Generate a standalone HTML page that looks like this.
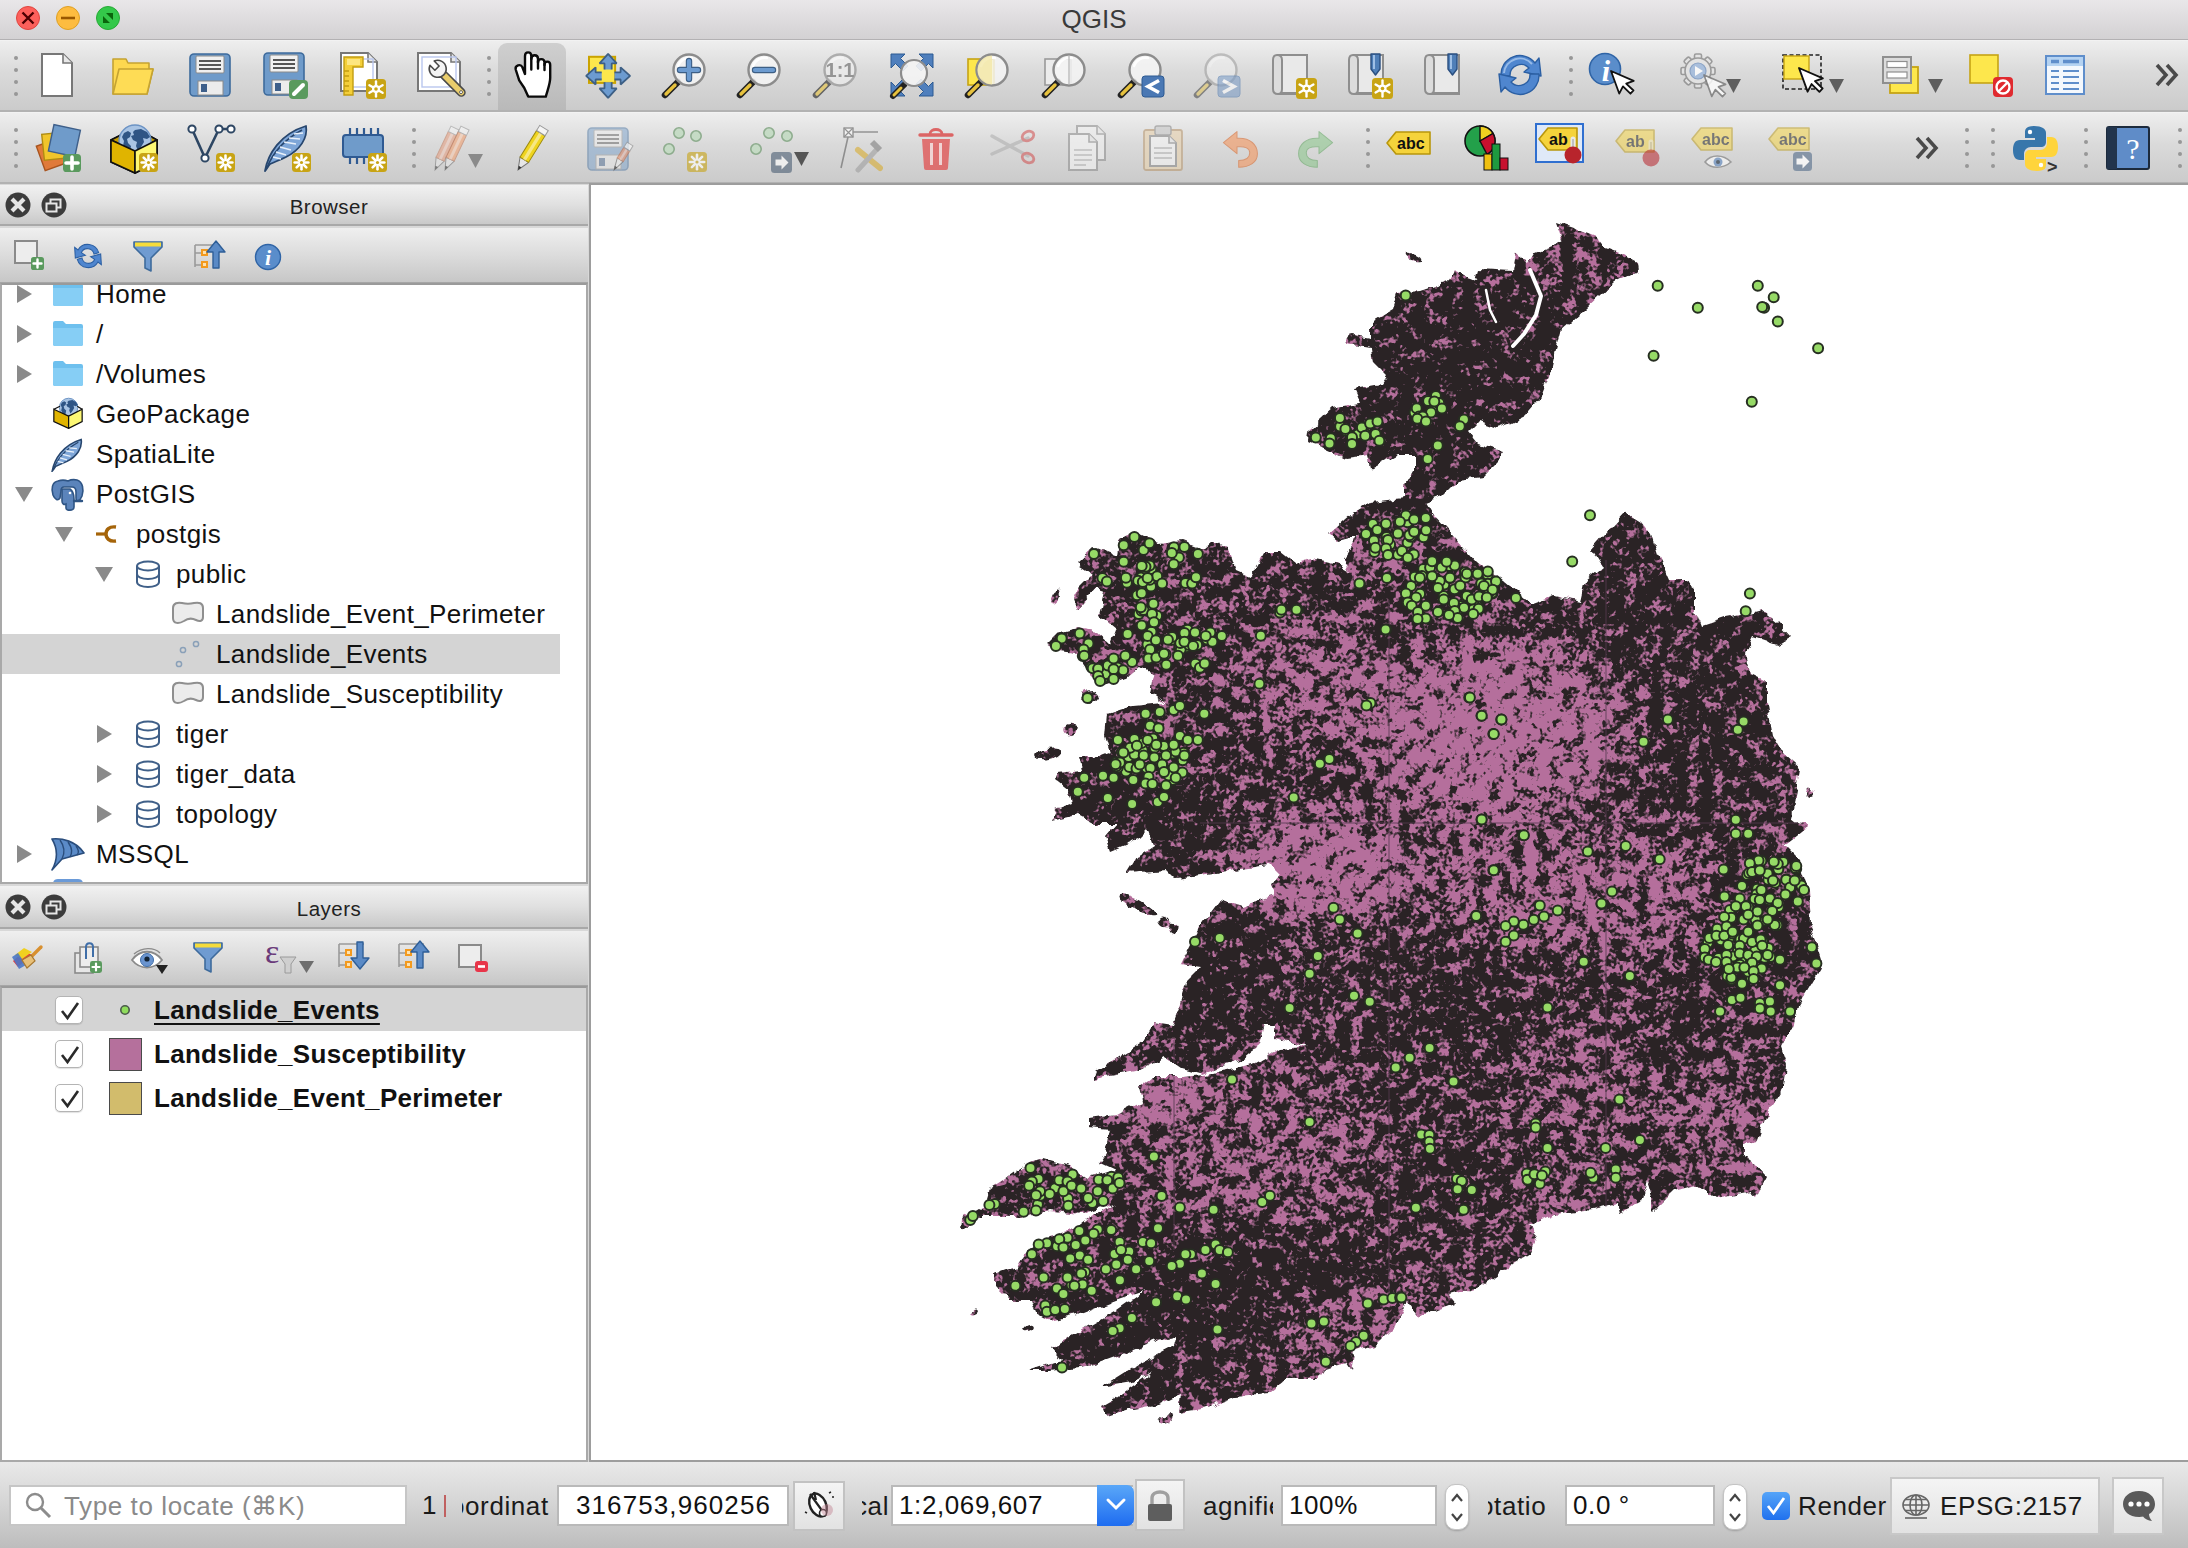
<!DOCTYPE html>
<html lang="en"><head><meta charset="utf-8"><title>QGIS</title><style>
html,body{margin:0;padding:0}
body{width:2188px;height:1548px;position:relative;overflow:hidden;background:#d8d8d8;font-family:"Liberation Sans",sans-serif;color:#111}
div,svg,span{position:absolute;box-sizing:border-box}
.titlebar{left:0;top:0;width:2188px;height:40px;background:linear-gradient(#e9e7e9,#d3d1d3);border-bottom:1px solid #b3b1b3}
.title{left:0;width:2188px;top:4px;text-align:center;font-size:26px;color:#3a3a3a;line-height:30px}
.tl{width:24px;height:24px;border-radius:12px;top:6px}
.tb{left:0;width:2188px;height:71px;background:linear-gradient(#eeeeee,#dadada 45%,#cbcbcb);border-bottom:2px solid #b2b2b2;border-top:1px solid #f2f2f2}
.hd{width:4px;height:4px;border-radius:2px;background:#979797}
.ic{overflow:visible}
.pressed{left:498px;top:43px;width:68px;height:67px;border-radius:9px 9px 0 0;background:linear-gradient(#cfcfcf,#b9b9b9)}
.ptitle{left:0;width:588px;padding-left:70px;letter-spacing:.5px;height:41px;background:linear-gradient(#f1f1f1,#e0e0e0 50%,#c9c9c9);border-bottom:2px solid #a8a8a8;text-align:center;font-size:20.5px;line-height:43px;color:#222}
.ptitle span{position:static}
.ptool{left:0;width:588px;height:56px;background:linear-gradient(#efefef,#dcdcdc 50%,#c7c7c7);border-bottom:2px solid #a6a6a6}
.tree{left:0;width:588px;background:#fff;border:2px solid #a9a9a9;border-top:2px solid #9a9a9a;overflow:hidden}
.row{left:0;height:40px;font-size:26px;line-height:40px;white-space:nowrap;letter-spacing:.4px}
.row span{position:static}
.lrow{left:0;height:44px;font-size:26px;line-height:44px;font-weight:700;white-space:nowrap;letter-spacing:.3px}
.cb{width:28px;height:28px;border-radius:5px;background:#fff;border:1.5px solid #b4b4b4;box-shadow:0 1px 1px rgba(0,0,0,.12)}
.canvas{left:589px;top:183px;width:1601px;height:1279px;background:#fff;border:2px solid #9d9d9d}
.status{left:0;top:1462px;width:2188px;height:86px;background:linear-gradient(#e9e9e9,#d6d6d6 45%,#bdbdbd)}
.st{font-size:26px;line-height:30px;white-space:nowrap;color:#1a1a1a;letter-spacing:.6px}
.inp{background:#fff;border:2px solid #b9b9b9;height:41px;font-size:26px;line-height:37px;padding-left:6px;white-space:nowrap;overflow:hidden;letter-spacing:.6px}
.btn{border:2px solid #c2c2c2;background:linear-gradient(#f4f4f4,#e2e2e2)}
.spin{width:24px;height:46px;border-radius:10px;background:#fff;border:1.5px solid #c4c4c4;box-shadow:0 1px 2px rgba(0,0,0,.2)}
</style></head><body>
<div class="titlebar"></div><div class="title">QGIS</div>
<div class="tl" style="left:16px;background:#fc605b;border:1px solid #e0443e"></div><svg style="left:20px;top:10px" width="16" height="16"><path d="M2.5 2.5L13.5 13.5M13.5 2.5L2.5 13.5" stroke="#4c0002" stroke-width="2.4"/></svg>
<div class="tl" style="left:56px;background:#fdbc40;border:1px solid #dfa023"></div><svg style="left:60px;top:10px" width="16" height="16"><path d="M1 8H15" stroke="#995700" stroke-width="2.6"/></svg>
<div class="tl" style="left:96px;background:#34c84a;border:1px solid #27aa35"></div><svg style="left:100px;top:10px" width="16" height="16"><path d="M3 6V13H10ZM6 3H13V10Z" fill="#0b650d"/></svg>
<div class="tb" style="top:40px;height:72px"></div><div class="tb" style="top:112px;height:72px"></div>
<div class="pressed"></div>
<div class="hd" style="left:14px;top:56px"></div><div class="hd" style="left:14px;top:68px"></div><div class="hd" style="left:14px;top:80px"></div><div class="hd" style="left:14px;top:92px"></div>
<div class="hd" style="left:487px;top:56px"></div><div class="hd" style="left:487px;top:68px"></div><div class="hd" style="left:487px;top:80px"></div><div class="hd" style="left:487px;top:92px"></div>
<div class="hd" style="left:1569px;top:56px"></div><div class="hd" style="left:1569px;top:68px"></div><div class="hd" style="left:1569px;top:80px"></div><div class="hd" style="left:1569px;top:92px"></div>
<div class="hd" style="left:14px;top:128px"></div><div class="hd" style="left:14px;top:140px"></div><div class="hd" style="left:14px;top:152px"></div><div class="hd" style="left:14px;top:164px"></div>
<div class="hd" style="left:412px;top:128px"></div><div class="hd" style="left:412px;top:140px"></div><div class="hd" style="left:412px;top:152px"></div><div class="hd" style="left:412px;top:164px"></div>
<div class="hd" style="left:1366px;top:128px"></div><div class="hd" style="left:1366px;top:140px"></div><div class="hd" style="left:1366px;top:152px"></div><div class="hd" style="left:1366px;top:164px"></div>
<div class="hd" style="left:1965px;top:128px"></div><div class="hd" style="left:1965px;top:140px"></div><div class="hd" style="left:1965px;top:152px"></div><div class="hd" style="left:1965px;top:164px"></div>
<div class="hd" style="left:1991px;top:128px"></div><div class="hd" style="left:1991px;top:140px"></div><div class="hd" style="left:1991px;top:152px"></div><div class="hd" style="left:1991px;top:164px"></div>
<div class="hd" style="left:2084px;top:128px"></div><div class="hd" style="left:2084px;top:140px"></div><div class="hd" style="left:2084px;top:152px"></div><div class="hd" style="left:2084px;top:164px"></div>
<div class="hd" style="left:2178px;top:128px"></div><div class="hd" style="left:2178px;top:140px"></div><div class="hd" style="left:2178px;top:152px"></div><div class="hd" style="left:2178px;top:164px"></div>
<svg class="ic" style="left:34px;top:51px" width="70" height="52" viewBox="0 0 70 52"><path d="M8 3H29L38 12V45H8Z" fill="#fff" stroke="#777" stroke-width="2"/><path d="M29 3V12H38" fill="#e8e8e8" stroke="#777" stroke-width="1.6"/></svg>
<svg class="ic" style="left:109px;top:51px" width="70" height="52" viewBox="0 0 70 52"><path d="M4 8H17L19 12H40V18H44L38 43H4Z" fill="#fdd84f" stroke="#c5a332" stroke-width="1.6" stroke-linejoin="round"/><path d="M4 43L10 18H44L38 43Z" fill="#fedc55" stroke="#c5a332" stroke-width="1.6" stroke-linejoin="round"/></svg>
<svg class="ic" style="left:186px;top:51px" width="70" height="52" viewBox="0 0 70 52"><g opacity="1"><rect x="4" y="3" width="40" height="42" rx="4" fill="#6f9bca" stroke="#3e6b9c" stroke-width="1.6"/><rect x="10" y="5" width="28" height="17" rx="1" fill="#f0f0f0" stroke="#8a8a8a" stroke-width="1"/><path d="M13 10h22M13 14h22M13 18h22" stroke="#555" stroke-width="1.8"/><rect x="12" y="30" width="25" height="14" fill="#ececec" stroke="#8a8a8a" stroke-width="1"/><rect x="15" y="33" width="6" height="8" fill="#3e5f8a"/></g></svg>
<svg class="ic" style="left:262px;top:51px" width="70" height="52" viewBox="0 0 70 52"><g opacity="1"><rect x="2" y="2" width="40" height="42" rx="4" fill="#6f9bca" stroke="#3e6b9c" stroke-width="1.6"/><rect x="8" y="4" width="28" height="17" rx="1" fill="#f0f0f0" stroke="#8a8a8a" stroke-width="1"/><path d="M11 9h22M11 13h22M11 17h22" stroke="#555" stroke-width="1.8"/><rect x="10" y="29" width="25" height="14" fill="#ececec" stroke="#8a8a8a" stroke-width="1"/><rect x="13" y="32" width="6" height="8" fill="#3e5f8a"/></g><rect x="27" y="29" width="19" height="19" rx="4" fill="#5a9a5e"/><path d="M32 43L41 34" stroke="#fff" stroke-width="4" stroke-linecap="round"/></svg>
<svg class="ic" style="left:337px;top:51px" width="70" height="52" viewBox="0 0 70 52"><path d="M4 2H31L40 11V40H4Z" fill="#fff" stroke="#777" stroke-width="2"/><path d="M31 2V11H40" fill="#e8e8e8" stroke="#777" stroke-width="1.6"/><rect x="10" y="8" width="26" height="28" fill="none" stroke="#b9c7ee" stroke-width="1.4"/><path d="M7 6H26V16H16V44H7Z" fill="#f4cf3a" stroke="#c29d10" stroke-width="1.4"/><path d="M7 20h5M7 25h5M7 30h5M7 35h5M7 40h5" stroke="#c29d10" stroke-width="1.4"/><rect x="10" y="8" width="13" height="6" fill="#fde680"/><rect x="29" y="28" width="20" height="20" rx="3.5" fill="#c8a415"/><g stroke="#fff" stroke-width="2.4" stroke-linecap="round"><line x1="39.0" y1="38.0" x2="39.0" y2="30.4" transform="rotate(0 39.0 38.0)"/><line x1="39.0" y1="38.0" x2="39.0" y2="30.4" transform="rotate(60 39.0 38.0)"/><line x1="39.0" y1="38.0" x2="39.0" y2="30.4" transform="rotate(120 39.0 38.0)"/><line x1="39.0" y1="38.0" x2="39.0" y2="30.4" transform="rotate(180 39.0 38.0)"/><line x1="39.0" y1="38.0" x2="39.0" y2="30.4" transform="rotate(240 39.0 38.0)"/><line x1="39.0" y1="38.0" x2="39.0" y2="30.4" transform="rotate(300 39.0 38.0)"/></g><circle cx="39.0" cy="38.0" r="4" fill="#fff"/><circle cx="39.0" cy="38.0" r="1.8" fill="#c8a415"/></svg>
<svg class="ic" style="left:414px;top:51px" width="70" height="52" viewBox="0 0 70 52"><path d="M4 2H37L46 11V40H4Z" fill="#fff" stroke="#777" stroke-width="2"/><path d="M37 2V11H46" fill="#e8e8e8" stroke="#777" stroke-width="1.6"/><rect x="8" y="6" width="34" height="30" fill="none" stroke="#b9c7ee" stroke-width="1.4"/><g transform="translate(23.7 17.8) rotate(-45)"><rect x="-3.6" y="6" width="7.2" height="31" rx="3.6" fill="#e9cd6c" stroke="#4a4a4a" stroke-width="1.6"/><path d="M3 -7.95A8.5 8.5 0 1 1 -3 -7.95V-1H3Z" fill="#f4f4f4" stroke="#4a4a4a" stroke-width="1.6" stroke-linejoin="round"/><circle cx="0" cy="33" r="1.5" fill="#fff" stroke="#4a4a4a" stroke-width="0.8"/></g></svg>
<svg class="ic" style="left:508px;top:51px" width="70" height="52" viewBox="0 0 70 52"><path d="M20.2 45.6L16.3 37L11.2 29.4L7.7 18.5C6.8 14.5 12.5 12.5 14.3 16L17 23V5C17 0.2 23.3 0.2 23.3 5V8C23.3 3 30 3 30 8V11.5C30 7 36.5 7 36.5 11.5V14C36.5 9.5 42.2 9.5 42.2 14V26.8C42.2 33 39.5 39 37.8 45.6Z" fill="#fff" stroke="#0a0a0a" stroke-width="2.4" stroke-linejoin="round"/><path d="M23.3 7V18.5M30 10V17.5M36.5 13V19" stroke="#0a0a0a" stroke-width="2.4" stroke-linecap="round"/></svg>
<svg class="ic" style="left:584px;top:51px" width="70" height="52" viewBox="0 0 70 52"><rect x="5" y="5.8" width="26.1" height="26.1" fill="#fde74c" stroke="#caa300" stroke-width="2"/><path transform="rotate(0 24.1 24.9)" d="M20.5 18.5V12.399999999999999H15.500000000000002L24.1 2.8999999999999986L32.7 12.399999999999999H27.700000000000003V18.5" fill="#6c9bd0" stroke="#3d5f85" stroke-width="1.8" stroke-linejoin="bevel"/><path transform="rotate(90 24.1 24.9)" d="M20.5 18.5V12.399999999999999H15.500000000000002L24.1 2.8999999999999986L32.7 12.399999999999999H27.700000000000003V18.5" fill="#6c9bd0" stroke="#3d5f85" stroke-width="1.8" stroke-linejoin="bevel"/><path transform="rotate(180 24.1 24.9)" d="M20.5 18.5V12.399999999999999H15.500000000000002L24.1 2.8999999999999986L32.7 12.399999999999999H27.700000000000003V18.5" fill="#6c9bd0" stroke="#3d5f85" stroke-width="1.8" stroke-linejoin="bevel"/><path transform="rotate(270 24.1 24.9)" d="M20.5 18.5V12.399999999999999H15.500000000000002L24.1 2.8999999999999986L32.7 12.399999999999999H27.700000000000003V18.5" fill="#6c9bd0" stroke="#3d5f85" stroke-width="1.8" stroke-linejoin="bevel"/></svg>
<svg class="ic" style="left:661px;top:51px" width="70" height="52" viewBox="0 0 70 52"><g opacity="1"><path d="M4 44L17 31" stroke="#222" stroke-width="6.5" stroke-linecap="round"/><path d="M5 43L14 34" stroke="#e7c23e" stroke-width="3.4" stroke-linecap="round"/><circle cx="28" cy="19" r="15.5" fill="#f4f4f4" fill-opacity="0.85" stroke="#8c8c8c" stroke-width="2.4"/><path d="M17 15a12 12 0 0 1 14-8" fill="none" stroke="#fff" stroke-width="2.5" stroke-linecap="round" opacity=".9"/><path d="M19 19H37M28 10V28" stroke="#3d5f85" stroke-width="6.4" stroke-linecap="round"/><path d="M19 19H37M28 10V28" stroke="#6c9bd0" stroke-width="4.2" stroke-linecap="round"/></g></svg>
<svg class="ic" style="left:736px;top:51px" width="70" height="52" viewBox="0 0 70 52"><g opacity="1"><path d="M4 44L17 31" stroke="#222" stroke-width="6.5" stroke-linecap="round"/><path d="M5 43L14 34" stroke="#e7c23e" stroke-width="3.4" stroke-linecap="round"/><circle cx="28" cy="19" r="15.5" fill="#f4f4f4" fill-opacity="0.85" stroke="#8c8c8c" stroke-width="2.4"/><path d="M17 15a12 12 0 0 1 14-8" fill="none" stroke="#fff" stroke-width="2.5" stroke-linecap="round" opacity=".9"/><path d="M19 19H37" stroke="#3d5f85" stroke-width="6.4" stroke-linecap="round"/><path d="M19 19H37" stroke="#6c9bd0" stroke-width="4.2" stroke-linecap="round"/></g></svg>
<svg class="ic" style="left:812px;top:51px" width="70" height="52" viewBox="0 0 70 52"><g opacity="0.62"><path d="M4 44L17 31" stroke="#222" stroke-width="6.5" stroke-linecap="round"/><path d="M5 43L14 34" stroke="#e7c23e" stroke-width="3.4" stroke-linecap="round"/><circle cx="28" cy="19" r="15.5" fill="#f4f4f4" fill-opacity="0.85" stroke="#8c8c8c" stroke-width="2.4"/><path d="M17 15a12 12 0 0 1 14-8" fill="none" stroke="#fff" stroke-width="2.5" stroke-linecap="round" opacity=".9"/><text x="28" y="26" text-anchor="middle" font-family="Liberation Sans,sans-serif" font-weight="700" font-size="20" fill="#6a6a6a">1:1</text></g></svg>
<svg class="ic" style="left:888px;top:51px" width="70" height="52" viewBox="0 0 70 52"><path transform="translate(3 3) rotate(0)" d="M0 0H14L9.5 4.5L17 12L12 17L4.5 9.5L0 14Z" fill="#4f7fbd" stroke="#2c5a92" stroke-width="1"/><path transform="translate(45 3) rotate(90)" d="M0 0H14L9.5 4.5L17 12L12 17L4.5 9.5L0 14Z" fill="#4f7fbd" stroke="#2c5a92" stroke-width="1"/><path transform="translate(45 45) rotate(180)" d="M0 0H14L9.5 4.5L17 12L12 17L4.5 9.5L0 14Z" fill="#4f7fbd" stroke="#2c5a92" stroke-width="1"/><path transform="translate(3 45) rotate(270)" d="M0 0H14L9.5 4.5L17 12L12 17L4.5 9.5L0 14Z" fill="#4f7fbd" stroke="#2c5a92" stroke-width="1"/><path d="M5 45L16 34" stroke="#222" stroke-width="6" stroke-linecap="round"/><path d="M6 44L13 37" stroke="#e7c23e" stroke-width="3" stroke-linecap="round"/><circle cx="26" cy="22" r="13" fill="#f4f4f4" fill-opacity=".9" stroke="#8c8c8c" stroke-width="2.2"/></svg>
<svg class="ic" style="left:964px;top:51px" width="70" height="52" viewBox="0 0 70 52"><rect x="4" y="8" width="26" height="26" fill="#fde74c" stroke="#c6a414" stroke-width="1.6"/><g opacity="1"><path d="M4 44L17 31" stroke="#222" stroke-width="6.5" stroke-linecap="round"/><path d="M5 43L14 34" stroke="#e7c23e" stroke-width="3.4" stroke-linecap="round"/><circle cx="28" cy="19" r="15.5" fill="#f4f4f4" fill-opacity="0.85" stroke="#8c8c8c" stroke-width="2.4"/><path d="M17 15a12 12 0 0 1 14-8" fill="none" stroke="#fff" stroke-width="2.5" stroke-linecap="round" opacity=".9"/><path d="M28 4.5A14.5 14.5 0 0 0 28 33.5Z" fill="#f3e7a4" opacity=".75"/></g></svg>
<svg class="ic" style="left:1041px;top:51px" width="70" height="52" viewBox="0 0 70 52"><rect x="4" y="8" width="26" height="26" fill="#ececec" stroke="#9a9a9a" stroke-width="1.6"/><g opacity="1"><path d="M4 44L17 31" stroke="#222" stroke-width="6.5" stroke-linecap="round"/><path d="M5 43L14 34" stroke="#e7c23e" stroke-width="3.4" stroke-linecap="round"/><circle cx="28" cy="19" r="15.5" fill="#f4f4f4" fill-opacity="0.85" stroke="#8c8c8c" stroke-width="2.4"/><path d="M17 15a12 12 0 0 1 14-8" fill="none" stroke="#fff" stroke-width="2.5" stroke-linecap="round" opacity=".9"/><path d="M28 4.5V33.5" stroke="#bbb" stroke-width="1.4"/></g></svg>
<svg class="ic" style="left:1117px;top:51px" width="70" height="52" viewBox="0 0 70 52"><g opacity="1"><path d="M4 44L17 31" stroke="#222" stroke-width="6.5" stroke-linecap="round"/><path d="M5 43L14 34" stroke="#e7c23e" stroke-width="3.4" stroke-linecap="round"/><circle cx="28" cy="19" r="15.5" fill="#f4f4f4" fill-opacity="0.85" stroke="#8c8c8c" stroke-width="2.4"/><path d="M17 15a12 12 0 0 1 14-8" fill="none" stroke="#fff" stroke-width="2.5" stroke-linecap="round" opacity=".9"/></g><rect x="25" y="25" width="22" height="21" rx="3" fill="#4a78b4" stroke="#2d5a92" stroke-width="1"/><path d="M42 29.5L31 35.5L42 41.5" fill="none" stroke="#fff" stroke-width="3.6"/></svg>
<svg class="ic" style="left:1193px;top:51px" width="70" height="52" viewBox="0 0 70 52"><g opacity="0.45"><path d="M4 44L17 31" stroke="#222" stroke-width="6.5" stroke-linecap="round"/><path d="M5 43L14 34" stroke="#e7c23e" stroke-width="3.4" stroke-linecap="round"/><circle cx="28" cy="19" r="15.5" fill="#f4f4f4" fill-opacity="0.85" stroke="#8c8c8c" stroke-width="2.4"/><path d="M17 15a12 12 0 0 1 14-8" fill="none" stroke="#fff" stroke-width="2.5" stroke-linecap="round" opacity=".9"/></g><g opacity=".6"><rect x="25" y="25" width="22" height="21" rx="3" fill="#7f9fc8" stroke="#5c82b2" stroke-width="1"/><path d="M30 29.5L41 35.5L30 41.5" fill="none" stroke="#fff" stroke-width="3.6"/></g></svg>
<svg class="ic" style="left:1269px;top:51px" width="70" height="52" viewBox="0 0 70 52"><g opacity="1"><path d="M8 4H38V42H12" fill="#e9e9e9" stroke="#8e8e8e" stroke-width="2"/><path d="M8 4C5 4 4 6 4 9V38C4 41 6 43 9 43C12 43 13 41 13 38V9C13 6 11 4 8 4Z" fill="#dcdcdc" stroke="#8e8e8e" stroke-width="2"/><path d="M9 43H38V42" fill="none" stroke="#8e8e8e" stroke-width="2"/></g><rect x="27" y="27" width="21" height="21" rx="3.5" fill="#c8a415"/><g stroke="#fff" stroke-width="2.4" stroke-linecap="round"><line x1="37.5" y1="37.5" x2="37.5" y2="29.52" transform="rotate(0 37.5 37.5)"/><line x1="37.5" y1="37.5" x2="37.5" y2="29.52" transform="rotate(60 37.5 37.5)"/><line x1="37.5" y1="37.5" x2="37.5" y2="29.52" transform="rotate(120 37.5 37.5)"/><line x1="37.5" y1="37.5" x2="37.5" y2="29.52" transform="rotate(180 37.5 37.5)"/><line x1="37.5" y1="37.5" x2="37.5" y2="29.52" transform="rotate(240 37.5 37.5)"/><line x1="37.5" y1="37.5" x2="37.5" y2="29.52" transform="rotate(300 37.5 37.5)"/></g><circle cx="37.5" cy="37.5" r="4" fill="#fff"/><circle cx="37.5" cy="37.5" r="1.8" fill="#c8a415"/></svg>
<svg class="ic" style="left:1345px;top:51px" width="70" height="52" viewBox="0 0 70 52"><g opacity="1"><path d="M8 4H38V42H12" fill="#e9e9e9" stroke="#8e8e8e" stroke-width="2"/><path d="M8 4C5 4 4 6 4 9V38C4 41 6 43 9 43C12 43 13 41 13 38V9C13 6 11 4 8 4Z" fill="#dcdcdc" stroke="#8e8e8e" stroke-width="2"/><path d="M9 43H38V42" fill="none" stroke="#8e8e8e" stroke-width="2"/></g><path d="M26 3h9v15l-4.5 6l-4.5-6z" fill="#4f7fb8" stroke="#2a4f80" stroke-width="1.4" stroke-linejoin="round"/><path d="M29 4v14" stroke="#9fc0e6" stroke-width="2"/><rect x="27" y="27" width="21" height="21" rx="3.5" fill="#c8a415"/><g stroke="#fff" stroke-width="2.4" stroke-linecap="round"><line x1="37.5" y1="37.5" x2="37.5" y2="29.52" transform="rotate(0 37.5 37.5)"/><line x1="37.5" y1="37.5" x2="37.5" y2="29.52" transform="rotate(60 37.5 37.5)"/><line x1="37.5" y1="37.5" x2="37.5" y2="29.52" transform="rotate(120 37.5 37.5)"/><line x1="37.5" y1="37.5" x2="37.5" y2="29.52" transform="rotate(180 37.5 37.5)"/><line x1="37.5" y1="37.5" x2="37.5" y2="29.52" transform="rotate(240 37.5 37.5)"/><line x1="37.5" y1="37.5" x2="37.5" y2="29.52" transform="rotate(300 37.5 37.5)"/></g><circle cx="37.5" cy="37.5" r="4" fill="#fff"/><circle cx="37.5" cy="37.5" r="1.8" fill="#c8a415"/></svg>
<svg class="ic" style="left:1421px;top:51px" width="70" height="52" viewBox="0 0 70 52"><g opacity="1"><path d="M8 4H38V42H12" fill="#e9e9e9" stroke="#8e8e8e" stroke-width="2"/><path d="M8 4C5 4 4 6 4 9V38C4 41 6 43 9 43C12 43 13 41 13 38V9C13 6 11 4 8 4Z" fill="#dcdcdc" stroke="#8e8e8e" stroke-width="2"/><path d="M9 43H38V42" fill="none" stroke="#8e8e8e" stroke-width="2"/></g><path d="M27 3h9v15l-4.5 6l-4.5-6z" fill="#4f7fb8" stroke="#2a4f80" stroke-width="1.4" stroke-linejoin="round"/><path d="M30 4v14" stroke="#9fc0e6" stroke-width="2"/></svg>
<svg class="ic" style="left:1496px;top:51px" width="70" height="52" viewBox="0 0 70 52"><path d="M5 25A19 19 0 0 1 39 12L43 7L45 25L28 21L33 17A11 11 0 0 0 14 25Z" fill="#4f86cf" stroke="#2b5fa3" stroke-width="1.4" stroke-linejoin="round"/><path transform="rotate(180 24 24)" d="M5 25A19 19 0 0 1 39 12L43 7L45 25L28 21L33 17A11 11 0 0 0 14 25Z" fill="#4f86cf" stroke="#2b5fa3" stroke-width="1.4" stroke-linejoin="round"/><path d="M8 22A16 16 0 0 1 36 13" fill="none" stroke="#a9c8ee" stroke-width="2" opacity=".8"/></svg>
<svg class="ic" style="left:1587px;top:51px" width="70" height="52" viewBox="0 0 70 52"><circle cx="18" cy="18" r="15.5" fill="#5a8dcb" stroke="#2f64a6" stroke-width="1.6"/><text x="19" y="30" text-anchor="middle" font-family="Liberation Serif,serif" font-style="italic" font-weight="700" font-size="30" fill="#fff">i</text><path transform="translate(24 20) rotate(-20) scale(1.0)" d="M0 0V24L6 18.5L10.5 28L14.5 26L10 17H18Z" fill="#fff" stroke="#111" stroke-width="1.8" stroke-linejoin="round"/></svg>
<svg class="ic" style="left:1678px;top:51px" width="70" height="52" viewBox="0 0 70 52"><g opacity="0.8"><g fill="#e4e4e4" stroke="#8a8a8a" stroke-width="1.6"><rect x="16.5" y="3" width="7" height="8" rx="1.5" transform="rotate(0 20 20)"/><rect x="16.5" y="3" width="7" height="8" rx="1.5" transform="rotate(45 20 20)"/><rect x="16.5" y="3" width="7" height="8" rx="1.5" transform="rotate(90 20 20)"/><rect x="16.5" y="3" width="7" height="8" rx="1.5" transform="rotate(135 20 20)"/><rect x="16.5" y="3" width="7" height="8" rx="1.5" transform="rotate(180 20 20)"/><rect x="16.5" y="3" width="7" height="8" rx="1.5" transform="rotate(225 20 20)"/><rect x="16.5" y="3" width="7" height="8" rx="1.5" transform="rotate(270 20 20)"/><rect x="16.5" y="3" width="7" height="8" rx="1.5" transform="rotate(315 20 20)"/><circle cx="20" cy="20" r="13"/></g><circle cx="20" cy="20" r="8" fill="#9db8dc" stroke="#7896c0" stroke-width="1.2"/><path d="M17 15L25 20L17 25Z" fill="#fff"/></g><g opacity=".8"><path transform="translate(26 24) rotate(-20) scale(0.95)" d="M0 0V24L6 18.5L10.5 28L14.5 26L10 17H18Z" fill="#fff" stroke="#777" stroke-width="1.8" stroke-linejoin="round"/></g><path d="M48 28h15l-7.5 14z" fill="#5e5e5e"/></svg>
<svg class="ic" style="left:1779px;top:51px" width="70" height="52" viewBox="0 0 70 52"><rect x="4" y="4" width="38" height="34" fill="none" stroke="#222" stroke-width="1.6" stroke-dasharray="4 2.5"/><rect x="5" y="5" width="25" height="23" fill="#fde74c" stroke="#c6a414" stroke-width="1.4"/><path transform="translate(20 17) rotate(-20) scale(1.05)" d="M0 0V24L6 18.5L10.5 28L14.5 26L10 17H18Z" fill="#fff" stroke="#111" stroke-width="1.8" stroke-linejoin="round"/><path d="M50 28h15l-7.5 14z" fill="#5e5e5e"/></svg>
<svg class="ic" style="left:1879px;top:51px" width="70" height="52" viewBox="0 0 70 52"><rect x="11" y="16" width="28" height="26" fill="#fde74c" stroke="#c6a414" stroke-width="1.8"/><rect x="4" y="6" width="28" height="26" fill="#dcdcdc" stroke="#8f8f8f" stroke-width="2"/><rect x="8" y="10.5" width="20" height="6" fill="#fff" stroke="#8f8f8f" stroke-width="1.2"/><rect x="8" y="21" width="20" height="6" fill="#fff" stroke="#8f8f8f" stroke-width="1.2"/><path d="M49 28h15l-7.5 14z" fill="#5e5e5e"/></svg>
<svg class="ic" style="left:1966px;top:51px" width="70" height="52" viewBox="0 0 70 52"><rect x="4" y="4" width="28" height="28" fill="#fde74c" stroke="#c6a414" stroke-width="1.6"/><rect x="27" y="26" width="20" height="20" rx="4" fill="#e02a2f"/><circle cx="37" cy="36" r="6.5" fill="none" stroke="#fff" stroke-width="2.4"/><path d="M32.5 40.5L41.5 31.5" stroke="#fff" stroke-width="2.4"/></svg>
<svg class="ic" style="left:2041px;top:51px" width="70" height="52" viewBox="0 0 70 52"><rect x="5" y="5" width="38" height="38" fill="#f4f8fd" stroke="#5f8ecb" stroke-width="2"/><rect x="6" y="6" width="36" height="9" fill="#b5d3f2"/><path d="M10 10.5h8M22 10.5h16" stroke="#5f8ecb" stroke-width="3.4"/><path d="M10 20h8M22 20h16M10 26h8M22 26h16M10 32h8M22 32h16M10 38h8M22 38h16" stroke="#5f8ecb" stroke-width="2.2"/></svg>
<svg class="ic" style="left:2145px;top:51px" width="70" height="52" viewBox="0 0 70 52"><path d="M12 14L21 24L12 34M22 14L31 24L22 34" fill="none" stroke="#4a4a4a" stroke-width="3.6"/></svg>
<svg class="ic" style="left:34px;top:124px" width="70" height="52" viewBox="0 0 70 52"><rect x="6" y="17" width="26" height="26" fill="#e07a3a" stroke="#a8541f" stroke-width="1.4" transform="rotate(-20 19 30)"/><rect x="9" y="9" width="26" height="26" fill="#f1c52b" stroke="#b08c12" stroke-width="1.4" transform="rotate(-6 22 22)"/><rect x="17" y="3" width="27" height="27" fill="#6f9bca" stroke="#3e5f8a" stroke-width="1.4" transform="rotate(12 30 16)"/><rect x="29" y="30" width="18" height="18" rx="3.6" fill="#5a9a5e"/><path d="M32.0 39.0H44.0M38.0 33.0V45.0" stroke="#fff" stroke-width="3.6" stroke-linecap="round"/></svg>
<svg class="ic" style="left:109px;top:124px" width="70" height="52" viewBox="0 0 70 52"><path d="M2 16L26 4L48 16V38L26 49L2 38Z" fill="#e0b400" stroke="#111" stroke-width="1.6" stroke-linejoin="round"/><path d="M26 27L48 16V38L26 49Z" fill="#fdf874" stroke="#111" stroke-width="1.6" stroke-linejoin="round"/><path d="M2 16L26 27L48 16L26 4Z" fill="#c29a00" stroke="#111" stroke-width="1.6" stroke-linejoin="round"/><circle cx="26" cy="17" r="16" fill="#a9c4e4" stroke="#6c93c4" stroke-width="1.4"/><path d="M15 9l4-2l3 2l-1 4l-3 2l1 4l3 3l-1 6l-3 3l-2-5l-2-4l1-5l-2-4zM26 6l6-1l6 3l3 5l-3 2l-4-1l1 4l-3 5l-3 4l-2-5l1-4l-4-2l-2-4l3-1l-1-3z" fill="#2f5585"/><path d="M2 16L26 27V49L2 38Z" fill="#e0b400" stroke="#111" stroke-width="1.6" stroke-linejoin="round"/><path d="M26 27L48 16V38L26 49Z" fill="#fdf874" stroke="#111" stroke-width="1.6" stroke-linejoin="round"/><g opacity="1"><rect x="30" y="29" width="19" height="19" rx="3.5" fill="#c8a415"/><g stroke="#fff" stroke-width="2.6" stroke-linecap="round"><line x1="39.5" y1="38.5" x2="39.5" y2="31.66" transform="rotate(0 39.5 38.5)"/><line x1="39.5" y1="38.5" x2="39.5" y2="31.66" transform="rotate(45 39.5 38.5)"/><line x1="39.5" y1="38.5" x2="39.5" y2="31.66" transform="rotate(90 39.5 38.5)"/><line x1="39.5" y1="38.5" x2="39.5" y2="31.66" transform="rotate(135 39.5 38.5)"/><line x1="39.5" y1="38.5" x2="39.5" y2="31.66" transform="rotate(180 39.5 38.5)"/><line x1="39.5" y1="38.5" x2="39.5" y2="31.66" transform="rotate(225 39.5 38.5)"/><line x1="39.5" y1="38.5" x2="39.5" y2="31.66" transform="rotate(270 39.5 38.5)"/><line x1="39.5" y1="38.5" x2="39.5" y2="31.66" transform="rotate(315 39.5 38.5)"/></g><circle cx="39.5" cy="38.5" r="1.6" fill="#c8a415"/></g></svg>
<svg class="ic" style="left:186px;top:124px" width="70" height="52" viewBox="0 0 70 52"><path d="M6 5L19 34L33 5H45" fill="none" stroke="#2d4663" stroke-width="2.6"/><g fill="#fff" stroke="#2d4663" stroke-width="2"><circle cx="6" cy="5" r="3.6"/><circle cx="19" cy="34" r="3.6"/><circle cx="33" cy="5" r="3.6"/><circle cx="45" cy="5" r="3.6"/></g><g opacity="1"><rect x="30" y="29" width="19" height="19" rx="3.5" fill="#c8a415"/><g stroke="#fff" stroke-width="2.6" stroke-linecap="round"><line x1="39.5" y1="38.5" x2="39.5" y2="31.66" transform="rotate(0 39.5 38.5)"/><line x1="39.5" y1="38.5" x2="39.5" y2="31.66" transform="rotate(45 39.5 38.5)"/><line x1="39.5" y1="38.5" x2="39.5" y2="31.66" transform="rotate(90 39.5 38.5)"/><line x1="39.5" y1="38.5" x2="39.5" y2="31.66" transform="rotate(135 39.5 38.5)"/><line x1="39.5" y1="38.5" x2="39.5" y2="31.66" transform="rotate(180 39.5 38.5)"/><line x1="39.5" y1="38.5" x2="39.5" y2="31.66" transform="rotate(225 39.5 38.5)"/><line x1="39.5" y1="38.5" x2="39.5" y2="31.66" transform="rotate(270 39.5 38.5)"/><line x1="39.5" y1="38.5" x2="39.5" y2="31.66" transform="rotate(315 39.5 38.5)"/></g><circle cx="39.5" cy="38.5" r="1.6" fill="#c8a415"/></g></svg>
<svg class="ic" style="left:262px;top:124px" width="70" height="52" viewBox="0 0 70 52"><path d="M3 47C6 30 18 10 44 2C46 14 38 26 24 33C18 36 12 38 8 40C6 42 5 45 3 47Z" fill="#7ea6d8" stroke="#27466e" stroke-width="1.8" stroke-linejoin="round"/><path d="M5 44C10 30 22 16 40 6" fill="none" stroke="#27466e" stroke-width="1.6"/><path d="M14 28l10 3M18 23l11 3M22 18l12 2M27 14l11 1M32 10l9-1M11 33l8 2" stroke="#e8f0fa" stroke-width="1.6"/><g opacity="1"><rect x="30" y="29" width="19" height="19" rx="3.5" fill="#c8a415"/><g stroke="#fff" stroke-width="2.6" stroke-linecap="round"><line x1="39.5" y1="38.5" x2="39.5" y2="31.66" transform="rotate(0 39.5 38.5)"/><line x1="39.5" y1="38.5" x2="39.5" y2="31.66" transform="rotate(45 39.5 38.5)"/><line x1="39.5" y1="38.5" x2="39.5" y2="31.66" transform="rotate(90 39.5 38.5)"/><line x1="39.5" y1="38.5" x2="39.5" y2="31.66" transform="rotate(135 39.5 38.5)"/><line x1="39.5" y1="38.5" x2="39.5" y2="31.66" transform="rotate(180 39.5 38.5)"/><line x1="39.5" y1="38.5" x2="39.5" y2="31.66" transform="rotate(225 39.5 38.5)"/><line x1="39.5" y1="38.5" x2="39.5" y2="31.66" transform="rotate(270 39.5 38.5)"/><line x1="39.5" y1="38.5" x2="39.5" y2="31.66" transform="rotate(315 39.5 38.5)"/></g><circle cx="39.5" cy="38.5" r="1.6" fill="#c8a415"/></g></svg>
<svg class="ic" style="left:338px;top:124px" width="70" height="52" viewBox="0 0 70 52"><path d="M12 4V40M19 4V40M26 4V40M33 4V40M40 4V40" stroke="#2f5a92" stroke-width="2.2"/><rect x="5" y="11" width="40" height="22" rx="3" fill="#6f9bca" stroke="#2f5a92" stroke-width="2"/><g opacity="1"><rect x="30" y="29" width="19" height="19" rx="3.5" fill="#c8a415"/><g stroke="#fff" stroke-width="2.6" stroke-linecap="round"><line x1="39.5" y1="38.5" x2="39.5" y2="31.66" transform="rotate(0 39.5 38.5)"/><line x1="39.5" y1="38.5" x2="39.5" y2="31.66" transform="rotate(45 39.5 38.5)"/><line x1="39.5" y1="38.5" x2="39.5" y2="31.66" transform="rotate(90 39.5 38.5)"/><line x1="39.5" y1="38.5" x2="39.5" y2="31.66" transform="rotate(135 39.5 38.5)"/><line x1="39.5" y1="38.5" x2="39.5" y2="31.66" transform="rotate(180 39.5 38.5)"/><line x1="39.5" y1="38.5" x2="39.5" y2="31.66" transform="rotate(225 39.5 38.5)"/><line x1="39.5" y1="38.5" x2="39.5" y2="31.66" transform="rotate(270 39.5 38.5)"/><line x1="39.5" y1="38.5" x2="39.5" y2="31.66" transform="rotate(315 39.5 38.5)"/></g><circle cx="39.5" cy="38.5" r="1.6" fill="#c8a415"/></g></svg>
<svg class="ic" style="left:429px;top:124px" width="70" height="52" viewBox="0 0 70 52"><g opacity="0.55" transform="translate(6 46) rotate(-64.5366549381284)"><path d="M0 0L12 -4.5V4.5Z" fill="#e6e6e6" stroke="#777" stroke-width="1"/><path d="M0 0L4 -1.6V1.6Z" fill="#333"/><rect x="12" y="-4.5" width="28.518813398452032" height="9" fill="#e59a7a" stroke="#c07a5a" stroke-width="1"/><rect x="12" y="-1.5" width="28.518813398452032" height="3.0" fill="#fff" opacity=".45"/><rect x="40.51881339845203" y="-4.5" width="6" height="9" fill="#f4f4f4" stroke="#999" stroke-width="1"/></g><g opacity="0.6" transform="translate(16 46) rotate(-64.5366549381284)"><path d="M0 0L12 -4.5V4.5Z" fill="#e6e6e6" stroke="#777" stroke-width="1"/><path d="M0 0L4 -1.6V1.6Z" fill="#333"/><rect x="12" y="-4.5" width="28.518813398452032" height="9" fill="#f0a070" stroke="#c07a5a" stroke-width="1"/><rect x="12" y="-1.5" width="28.518813398452032" height="3.0" fill="#fff" opacity=".45"/><rect x="40.51881339845203" y="-4.5" width="6" height="9" fill="#f4f4f4" stroke="#999" stroke-width="1"/></g><path d="M39 30h15l-7.5 14z" fill="#8a8a8a"/></svg>
<svg class="ic" style="left:508px;top:124px" width="70" height="52" viewBox="0 0 70 52"><g opacity="1" transform="translate(10 46) rotate(-58.240519915187214)"><path d="M0 0L12 -5.0V5.0Z" fill="#e6e6e6" stroke="#777" stroke-width="1"/><path d="M0 0L4 -1.6V1.6Z" fill="#333"/><rect x="12" y="-5.0" width="31.396356140913873" height="10" fill="#efd41f" stroke="#9c8a10" stroke-width="1"/><rect x="12" y="-1.6666666666666667" width="31.396356140913873" height="3.3333333333333335" fill="#fff" opacity=".45"/><rect x="43.39635614091387" y="-5.0" width="6" height="10" fill="#f4f4f4" stroke="#999" stroke-width="1"/></g></svg>
<svg class="ic" style="left:584px;top:124px" width="70" height="52" viewBox="0 0 70 52"><g opacity="0.45"><rect x="4" y="4" width="40" height="42" rx="4" fill="#6f9bca" stroke="#3e6b9c" stroke-width="1.6"/><rect x="10" y="6" width="28" height="17" rx="1" fill="#f0f0f0" stroke="#8a8a8a" stroke-width="1"/><path d="M13 11h22M13 15h22M13 19h22" stroke="#555" stroke-width="1.8"/><rect x="12" y="31" width="25" height="14" fill="#ececec" stroke="#8a8a8a" stroke-width="1"/><rect x="15" y="34" width="6" height="8" fill="#3e5f8a"/></g><g opacity="0.7" transform="translate(30 46) rotate(-58.3924977537511)"><path d="M0 0L12 -3.5V3.5Z" fill="#e6e6e6" stroke="#777" stroke-width="1"/><path d="M0 0L4 -1.6V1.6Z" fill="#333"/><rect x="12" y="-3.5" width="12.528675044947494" height="7" fill="#e59a7a" stroke="#c07a5a" stroke-width="1"/><rect x="12" y="-1.1666666666666667" width="12.528675044947494" height="2.3333333333333335" fill="#fff" opacity=".45"/><rect x="24.528675044947494" y="-3.5" width="6" height="7" fill="#f4f4f4" stroke="#999" stroke-width="1"/></g></svg>
<svg class="ic" style="left:661px;top:124px" width="70" height="52" viewBox="0 0 70 52"><g fill="#c3dbc3" stroke="#86a886" stroke-width="1.6" opacity=".9"><circle cx="8" cy="25" r="5.2"/><circle cx="18" cy="9" r="5.2"/><circle cx="35" cy="12" r="5.2"/></g><g opacity="0.6"><rect x="26" y="28" width="20" height="20" rx="3.5" fill="#c8a415"/><g stroke="#fff" stroke-width="2.6" stroke-linecap="round"><line x1="36.0" y1="38.0" x2="36.0" y2="30.8" transform="rotate(0 36.0 38.0)"/><line x1="36.0" y1="38.0" x2="36.0" y2="30.8" transform="rotate(45 36.0 38.0)"/><line x1="36.0" y1="38.0" x2="36.0" y2="30.8" transform="rotate(90 36.0 38.0)"/><line x1="36.0" y1="38.0" x2="36.0" y2="30.8" transform="rotate(135 36.0 38.0)"/><line x1="36.0" y1="38.0" x2="36.0" y2="30.8" transform="rotate(180 36.0 38.0)"/><line x1="36.0" y1="38.0" x2="36.0" y2="30.8" transform="rotate(225 36.0 38.0)"/><line x1="36.0" y1="38.0" x2="36.0" y2="30.8" transform="rotate(270 36.0 38.0)"/><line x1="36.0" y1="38.0" x2="36.0" y2="30.8" transform="rotate(315 36.0 38.0)"/></g><circle cx="36.0" cy="38.0" r="1.6" fill="#c8a415"/></g></svg>
<svg class="ic" style="left:749px;top:124px" width="70" height="52" viewBox="0 0 70 52"><g fill="#c3dbc3" stroke="#86a886" stroke-width="1.6" opacity=".9"><circle cx="7" cy="25" r="5.2"/><circle cx="20" cy="9" r="5.2"/><circle cx="38" cy="12" r="5.2"/></g><g opacity="0.6"><rect x="22" y="28" width="21" height="21" rx="3.5" fill="#4a5d73"/><path d="M26.5 35.5H32.5V31.5L39.5 38.5L32.5 45.5V41.5H26.5Z" fill="#fff"/></g><path d="M45 28h15l-7.5 14z" fill="#555"/></svg>
<svg class="ic" style="left:838px;top:124px" width="70" height="52" viewBox="0 0 70 52"><g opacity=".55"><rect x="6" y="4" width="9" height="9" fill="#fff" stroke="#555" stroke-width="1.4"/><path d="M6 4l9 9M15 4l-9 9" stroke="#555" stroke-width="1.2"/><path d="M15 8H40M10 13L3 44" stroke="#555" stroke-width="1.6" fill="none"/><path d="M20 26L42 44" stroke="#d8a820" stroke-width="6" stroke-linecap="round"/><path d="M40 24L20 46" stroke="#9a9a9a" stroke-width="5" stroke-linecap="round"/><path d="M34 18l8 8" stroke="#777" stroke-width="6"/></g></svg>
<svg class="ic" style="left:912px;top:124px" width="70" height="52" viewBox="0 0 70 52"><g opacity=".85"><path d="M8 11H40" stroke="#dc5050" stroke-width="3.4" stroke-linecap="round"/><path d="M18 10C18 4 30 4 30 10" fill="none" stroke="#dc5050" stroke-width="2.8"/><path d="M10 15H38L36 44Q36 46 34 46H14Q12 46 12 44Z" fill="#e06060"/><path d="M19.5 19V41M28.5 19V41" stroke="#f4d4d4" stroke-width="3"/></g></svg>
<svg class="ic" style="left:988px;top:124px" width="70" height="52" viewBox="0 0 70 52"><g opacity=".5"><path d="M4 12L40 32M4 30L40 14" stroke="#a8a8a8" stroke-width="3.4" stroke-linecap="round"/><ellipse cx="40" cy="12" rx="6" ry="4.5" fill="none" stroke="#d04040" stroke-width="2.8" transform="rotate(-25 40 12)"/><ellipse cx="40" cy="34" rx="6" ry="4.5" fill="none" stroke="#d04040" stroke-width="2.8" transform="rotate(25 40 34)"/></g></svg>
<svg class="ic" style="left:1063px;top:124px" width="70" height="52" viewBox="0 0 70 52"><g opacity=".55"><path d="M14 2H34L42 10V36H14Z" fill="#f2f2f2" stroke="#8a8a8a" stroke-width="2"/><path d="M34 2V10H42" fill="#e8e8e8" stroke="#8a8a8a" stroke-width="1.6"/><path d="M6 10H26L34 18V46H6Z" fill="#f8f8f8" stroke="#8a8a8a" stroke-width="2"/><path d="M26 10V18H34" fill="#e8e8e8" stroke="#8a8a8a" stroke-width="1.6"/><path d="M11 26h18M11 31h18M11 36h18M11 41h12" stroke="#aaa" stroke-width="1.6"/></g></svg>
<svg class="ic" style="left:1139px;top:124px" width="70" height="52" viewBox="0 0 70 52"><g opacity=".6"><rect x="5" y="6" width="38" height="40" rx="2" fill="#e8d2ae" stroke="#b89870" stroke-width="1.8"/><rect x="16" y="2" width="16" height="9" rx="2" fill="#c8c8c8" stroke="#8a8a8a" stroke-width="1.4"/><path d="M11 12H30L37 19V42H11Z" fill="#f6f6f6" stroke="#8a8a8a" stroke-width="2"/><path d="M30 12V19H37" fill="#e8e8e8" stroke="#8a8a8a" stroke-width="1.6"/><path d="M15 24h18M15 29h18M15 34h18" stroke="#aaa" stroke-width="1.6"/></g></svg>
<svg class="ic" style="left:1216px;top:124px" width="70" height="52" viewBox="0 0 70 52"><path transform="translate(4 5) scale(.85)" d="M4 16L20 3V11C36 10 44 19 44 29C44 39 35 45 22 45V37C31 37 35 33 35 28C35 23 30 20 20 21V29Z" fill="#f0a070" stroke="#d87c4a" stroke-width="1.2" opacity=".7" stroke-linejoin="round"/></svg>
<svg class="ic" style="left:1291px;top:124px" width="70" height="52" viewBox="0 0 70 52"><path transform="translate(45 5) scale(-.85 .85)" d="M4 16L20 3V11C36 10 44 19 44 29C44 39 35 45 22 45V37C31 37 35 33 35 28C35 23 30 20 20 21V29Z" fill="#90c890" stroke="#68a868" stroke-width="1.2" opacity=".6" stroke-linejoin="round"/></svg>
<svg class="ic" style="left:1385px;top:124px" width="70" height="52" viewBox="0 0 70 52"><g opacity="1"><path d="M2 19L11 8H45V30H11Z" fill="#f5d33b" stroke="#b8960c" stroke-width="1.6" stroke-linejoin="round"/><text x="12" y="25" font-family="Liberation Sans,sans-serif" font-weight="700" font-size="16" fill="#111">abc</text></g></svg>
<svg class="ic" style="left:1461px;top:124px" width="70" height="52" viewBox="0 0 70 52"><circle cx="19" cy="17" r="15" fill="#23a04a" stroke="#111" stroke-width="1.6"/><path d="M19 17V2A15 15 0 0 1 32 9.5Z" fill="#f0d020" stroke="#111" stroke-width="1.4"/><path d="M19 17L32 9.5A15 15 0 0 1 26 30.3Z" fill="#c8102e" stroke="#111" stroke-width="1.4"/><rect x="23" y="30" width="8" height="16" fill="#f0c010" stroke="#111" stroke-width="1"/><rect x="31" y="20" width="8" height="26" fill="#1e9a40" stroke="#111" stroke-width="1"/><rect x="39" y="34" width="8" height="12" fill="#c8102e" stroke="#111" stroke-width="1"/></svg>
<svg class="ic" style="left:1536px;top:124px" width="70" height="52" viewBox="0 0 70 52"><rect x="0" y="0" width="47" height="38" fill="#dfe9f8" stroke="#2f6fd0" stroke-width="2"/><g opacity="1"><path d="M3 15L12 4H41V26H12Z" fill="#f5d33b" stroke="#b8960c" stroke-width="1.6" stroke-linejoin="round"/><text x="13" y="21" font-family="Liberation Sans,sans-serif" font-weight="700" font-size="16" fill="#111">ab</text></g><g opacity="1"><path d="M37 15V27" stroke="#e8e8e8" stroke-width="5" stroke-linecap="round"/><path d="M37 15V27" stroke="#999" stroke-width="1"/><circle cx="37" cy="31" r="8.5" fill="#b8242c"/></g></svg>
<svg class="ic" style="left:1613px;top:124px" width="70" height="52" viewBox="0 0 70 52"><g opacity="0.5"><path d="M3 17L12 6H41V28H12Z" fill="#f5d33b" stroke="#b8960c" stroke-width="1.6" stroke-linejoin="round"/><text x="13" y="23" font-family="Liberation Sans,sans-serif" font-weight="700" font-size="16" fill="#111">ab</text></g><g opacity="0.55"><path d="M38 18V30" stroke="#e8e8e8" stroke-width="5" stroke-linecap="round"/><path d="M38 18V30" stroke="#999" stroke-width="1"/><circle cx="38" cy="34" r="8.5" fill="#b8242c"/></g></svg>
<svg class="ic" style="left:1689px;top:124px" width="70" height="52" viewBox="0 0 70 52"><g opacity="0.5"><path d="M3 15L12 4H43V26H12Z" fill="#f5d33b" stroke="#b8960c" stroke-width="1.6" stroke-linejoin="round"/><text x="13" y="21" font-family="Liberation Sans,sans-serif" font-weight="700" font-size="16" fill="#111">abc</text></g><g opacity=".6"><path d="M16 38C22 30 34 30 42 38C34 45 22 45 16 38Z" fill="#fff" stroke="#777" stroke-width="1.6"/><circle cx="29" cy="38" r="4.5" fill="#5a86c0"/><circle cx="29" cy="38" r="2" fill="#123"/></g></svg>
<svg class="ic" style="left:1766px;top:124px" width="70" height="52" viewBox="0 0 70 52"><g opacity="0.5"><path d="M3 15L12 4H43V26H12Z" fill="#f5d33b" stroke="#b8960c" stroke-width="1.6" stroke-linejoin="round"/><text x="13" y="21" font-family="Liberation Sans,sans-serif" font-weight="700" font-size="16" fill="#111">abc</text></g><g opacity="0.75"><rect x="27" y="28" width="19" height="19" rx="3.5" fill="#6c8098"/><path d="M30.5 34.5H36.5V30.5L43.5 37.5L36.5 44.5V40.5H30.5Z" fill="#fff"/></g></svg>
<svg class="ic" style="left:1905px;top:124px" width="70" height="52" viewBox="0 0 70 52"><path d="M12 14L21 24L12 34M22 14L31 24L22 34" fill="none" stroke="#4a4a4a" stroke-width="3.6"/></svg>
<svg class="ic" style="left:2011px;top:124px" width="70" height="52" viewBox="0 0 70 52"><path d="M23 2C14 2 14 6 14 9V14H24V16H9C4 16 2 20 2 26C2 32 4 36 9 36H13V30C13 26 16 23 20 23H30C33 23 35 21 35 18V9C35 5 31 2 23 2Z" fill="#3776ab"/><circle cx="19" cy="8" r="2.2" fill="#fff"/><path d="M26 47C35 47 35 43 35 40V35H25V33H40C45 33 47 29 47 23C47 17 45 13 40 13H36V19C36 23 33 26 29 26H19C16 26 14 28 14 31V40C14 44 18 47 26 47Z" fill="#ffd43b"/><circle cx="30" cy="41" r="2.2" fill="#fff"/><text x="36" y="49" font-family="Liberation Sans,sans-serif" font-weight="700" font-size="18" fill="#333">&gt;</text></svg>
<svg class="ic" style="left:2104px;top:124px" width="70" height="52" viewBox="0 0 70 52"><rect x="3" y="3" width="42" height="42" rx="2" fill="#5f8cc8" stroke="#1c2a3c" stroke-width="2"/><rect x="3" y="3" width="10" height="42" fill="#22344c"/><text x="29" y="35" text-anchor="middle" font-family="Liberation Serif,serif" font-size="30" fill="#fff">?</text></svg>
<div class="canvas"></div>
<div class="ptitle" style="top:185px">Browser</div><svg style="left:2px;top:190px" width="70" height="30" viewBox="0 0 70 30"><circle cx="16" cy="15" r="12.5" fill="#3c3c3c"/><path d="M10 9L22 21M22 9L10 21" stroke="#e6e6e6" stroke-width="4.2"/><circle cx="52" cy="15" r="12.5" fill="#3c3c3c"/><rect x="48.5" y="9.5" width="10" height="8" fill="none" stroke="#e6e6e6" stroke-width="2"/><rect x="44.5" y="13.5" width="10" height="8" fill="#3c3c3c" stroke="#e6e6e6" stroke-width="2"/></svg>
<div class="ptool" style="top:228px"></div>
<svg style="left:12px;top:238px" width="36" height="36" viewBox="0 0 36 36"><rect x="3" y="3" width="22" height="22" fill="#ededed" stroke="#8a8a8a" stroke-width="2"/><rect x="19" y="19" width="13" height="13" rx="2.6" fill="#5a9a5e"/><path d="M21.5 25.5H29.5M25.5 21.5V29.5" stroke="#fff" stroke-width="2.4" stroke-linecap="round"/></svg>
<svg style="left:72px;top:240px" width="32" height="32" viewBox="0 0 48 48"><path d="M40 19A17 17 0 0 0 9 15L4 11L5 27L20 23L14 19A10 10 0 0 1 33 21Z" fill="#4f86cf" stroke="#2b5fa3" stroke-width="1.6"/><path d="M8 29A17 17 0 0 0 39 33L44 37L43 21L28 25L34 29A10 10 0 0 1 15 27Z" fill="#4f86cf" stroke="#2b5fa3" stroke-width="1.6"/></svg>
<svg style="left:132px;top:240px" width="32" height="34" viewBox="0 0 32 34"><path d="M2 2H30V7L19 18V31L13 28V18L2 7Z" fill="#6f9bd1" stroke="#3e6b9c" stroke-width="1.6" stroke-linejoin="round"/><rect x="3" y="2.5" width="26" height="4" fill="#f5dc3c"/></svg>
<svg style="left:192px;top:240px" width="34" height="32" viewBox="0 0 34 32"><path d="M3 5V27M3 5H28M3 13H11M3 25H11" stroke="#9a9a9a" stroke-width="1.6" fill="none"/><rect x="9" y="9" width="7" height="7" fill="#f39a1e"/><rect x="9" y="21" width="7" height="7" fill="#f39a1e"/><rect x="11" y="11" width="3" height="3" fill="#fde2b0"/><rect x="11" y="23" width="3" height="3" fill="#fde2b0"/><path d="M21 28V12H15L24 1L33 12H27V28Z" fill="#5a8ac6" stroke="#2f5f98" stroke-width="1.4" stroke-linejoin="round"/></svg>
<svg style="left:254px;top:243px" width="28" height="28" viewBox="0 0 28 28"><circle cx="14" cy="14" r="12.5" fill="#5a8dcb" stroke="#2f64a6" stroke-width="1.4"/><text x="14" y="22" text-anchor="middle" font-family="Liberation Serif,serif" font-style="italic" font-weight="700" font-size="22" fill="#fff">i</text></svg>
<div class="tree" style="top:283px;height:601px">
<svg style="left:15px;top:0px" width="15" height="18"><path d="M0 0V18L15 9Z" fill="#8a8a8a"/></svg>
<svg style="left:50px;top:-5px" width="32" height="28" viewBox="0 0 32 28"><path d="M1 3Q1 1 3 1H11L14 4H29Q31 4 31 6V24Q31 26 29 26H3Q1 26 1 24Z" fill="#6ec0ee"/><path d="M1 8H31V24Q31 26 29 26H3Q1 26 1 24Z" fill="#86cef5"/></svg>
<div class="row" style="left:94px;top:-11px">Home</div>
<svg style="left:15px;top:40px" width="15" height="18"><path d="M0 0V18L15 9Z" fill="#8a8a8a"/></svg>
<svg style="left:50px;top:35px" width="32" height="28" viewBox="0 0 32 28"><path d="M1 3Q1 1 3 1H11L14 4H29Q31 4 31 6V24Q31 26 29 26H3Q1 26 1 24Z" fill="#6ec0ee"/><path d="M1 8H31V24Q31 26 29 26H3Q1 26 1 24Z" fill="#86cef5"/></svg>
<div class="row" style="left:94px;top:29px">/</div>
<svg style="left:15px;top:80px" width="15" height="18"><path d="M0 0V18L15 9Z" fill="#8a8a8a"/></svg>
<svg style="left:50px;top:75px" width="32" height="28" viewBox="0 0 32 28"><path d="M1 3Q1 1 3 1H11L14 4H29Q31 4 31 6V24Q31 26 29 26H3Q1 26 1 24Z" fill="#6ec0ee"/><path d="M1 8H31V24Q31 26 29 26H3Q1 26 1 24Z" fill="#86cef5"/></svg>
<div class="row" style="left:94px;top:69px">/Volumes</div>
<svg style="left:50px;top:112px" width="32" height="32" viewBox="0 0 50 52"><circle cx="26" cy="17" r="15" fill="#a9c4e4" stroke="#6c93c4" stroke-width="1.6"/><path d="M15 9l4-2l3 2l-1 4l-3 2l1 4l3 3l-1 6l-3 3l-2-5l-2-4l1-5l-2-4zM26 6l6-1l6 3l3 5l-3 2l-4-1l1 4l-3 5l-3 4l-2-5l1-4l-4-2l-2-4l3-1l-1-3z" fill="#2f5585"/><path d="M2 20L26 31V51L2 40Z" fill="#e0b400" stroke="#111" stroke-width="2"/><path d="M26 31L48 20V40L26 51Z" fill="#fdf874" stroke="#111" stroke-width="2"/><path d="M2 20L12 15M48 20L40 15" stroke="#111" stroke-width="2"/></svg>
<div class="row" style="left:94px;top:109px">GeoPackage</div>
<svg style="left:48px;top:153px" width="34" height="34" viewBox="0 0 48 48"><path d="M3 47C6 30 18 10 44 2C46 14 38 26 24 33C18 36 12 38 8 40C6 42 5 45 3 47Z" fill="#7ea6d8" stroke="#27466e" stroke-width="2.2"/><path d="M5 44C10 30 22 16 40 6" fill="none" stroke="#27466e" stroke-width="1.8"/><path d="M14 28l10 3M18 23l11 3M22 18l12 2M27 14l11 1M11 33l8 2" stroke="#e8f0fa" stroke-width="1.8"/></svg>
<div class="row" style="left:94px;top:149px">SpatiaLite</div>
<svg style="left:13px;top:202px" width="18" height="15"><path d="M0 0H18L9 15Z" fill="#8a8a8a"/></svg>
<svg style="left:48px;top:192px" width="36" height="36" viewBox="0 0 36 36"><path d="M8 4C2 5 1 12 3 18C5 23 8 24 10 21L11 14C11 12 12 10 14 10H22C25 10 26 12 26 15V21C26 26 30 24 32 19C34 13 33 5 27 3C23 2 20 3 18 4C15 3 11 3 8 4Z" fill="#5b84bb" stroke="#2f5585" stroke-width="1.6"/><path d="M12 12V24C12 27 14 28 16 27V31C16 34 24 34 24 30V22C24 18 23 14 20 12Z" fill="#5b84bb" stroke="#2f5585" stroke-width="1.6"/><path d="M24 24H32" stroke="#2f5585" stroke-width="2.4" stroke-linecap="round"/><circle cx="20" cy="16" r="1.3" fill="#fff"/></svg>
<div class="row" style="left:94px;top:189px">PostGIS</div>
<svg style="left:53px;top:242px" width="18" height="15"><path d="M0 0H18L9 15Z" fill="#8a8a8a"/></svg>
<svg style="left:93px;top:239px" width="26" height="20" viewBox="0 0 26 20"><path d="M1 10H12" stroke="#a5640a" stroke-width="3.2"/><path d="M21 3C14 2 11 6 11 10C11 14 14 18 21 17" fill="none" stroke="#a5640a" stroke-width="3.4"/></svg>
<div class="row" style="left:134px;top:229px">postgis</div>
<svg style="left:93px;top:282px" width="18" height="15"><path d="M0 0H18L9 15Z" fill="#8a8a8a"/></svg>
<svg style="left:132px;top:275px" width="28" height="28" viewBox="0 0 28 28"><path d="M3 6V22C3 25 8 27 14 27C20 27 25 25 25 22V6" fill="#fff" stroke="#3f5f88" stroke-width="2"/><ellipse cx="14" cy="6" rx="11" ry="4.5" fill="#fff" stroke="#3f5f88" stroke-width="2"/><path d="M3 14C3 17 8 19 14 19C20 19 25 17 25 14" fill="none" stroke="#3f5f88" stroke-width="2"/></svg>
<div class="row" style="left:174px;top:269px">public</div>
<svg style="left:168px;top:315px" width="36" height="26" viewBox="0 0 36 26"><path d="M3 8C3 3 8 2 12 3C16 4 20 4 24 3C29 2 33 3 33 8V17C33 21 30 22 26 20C22 18 18 18 14 21C9 24 3 24 3 18Z" fill="#ececec" stroke="#8f8f8f" stroke-width="2"/></svg>
<div class="row" style="left:214px;top:309px">Landslide_Event_Perimeter</div>
<div style="left:0;top:349px;width:558px;height:40px;background:#d4d4d4"></div>
<svg style="left:172px;top:354px" width="30" height="30" viewBox="0 0 30 30"><g fill="none" stroke="#8aa0b8" stroke-width="1.5"><circle cx="22" cy="5" r="2.6"/><circle cx="9" cy="11" r="2.6"/><circle cx="5" cy="25" r="2.6"/></g></svg>
<div class="row" style="left:214px;top:349px">Landslide_Events</div>
<svg style="left:168px;top:395px" width="36" height="26" viewBox="0 0 36 26"><path d="M3 8C3 3 8 2 12 3C16 4 20 4 24 3C29 2 33 3 33 8V17C33 21 30 22 26 20C22 18 18 18 14 21C9 24 3 24 3 18Z" fill="#ececec" stroke="#8f8f8f" stroke-width="2"/></svg>
<div class="row" style="left:214px;top:389px">Landslide_Susceptibility</div>
<svg style="left:95px;top:440px" width="15" height="18"><path d="M0 0V18L15 9Z" fill="#8a8a8a"/></svg>
<svg style="left:132px;top:435px" width="28" height="28" viewBox="0 0 28 28"><path d="M3 6V22C3 25 8 27 14 27C20 27 25 25 25 22V6" fill="#fff" stroke="#3f5f88" stroke-width="2"/><ellipse cx="14" cy="6" rx="11" ry="4.5" fill="#fff" stroke="#3f5f88" stroke-width="2"/><path d="M3 14C3 17 8 19 14 19C20 19 25 17 25 14" fill="none" stroke="#3f5f88" stroke-width="2"/></svg>
<div class="row" style="left:174px;top:429px">tiger</div>
<svg style="left:95px;top:480px" width="15" height="18"><path d="M0 0V18L15 9Z" fill="#8a8a8a"/></svg>
<svg style="left:132px;top:475px" width="28" height="28" viewBox="0 0 28 28"><path d="M3 6V22C3 25 8 27 14 27C20 27 25 25 25 22V6" fill="#fff" stroke="#3f5f88" stroke-width="2"/><ellipse cx="14" cy="6" rx="11" ry="4.5" fill="#fff" stroke="#3f5f88" stroke-width="2"/><path d="M3 14C3 17 8 19 14 19C20 19 25 17 25 14" fill="none" stroke="#3f5f88" stroke-width="2"/></svg>
<div class="row" style="left:174px;top:469px">tiger_data</div>
<svg style="left:95px;top:520px" width="15" height="18"><path d="M0 0V18L15 9Z" fill="#8a8a8a"/></svg>
<svg style="left:132px;top:515px" width="28" height="28" viewBox="0 0 28 28"><path d="M3 6V22C3 25 8 27 14 27C20 27 25 25 25 22V6" fill="#fff" stroke="#3f5f88" stroke-width="2"/><ellipse cx="14" cy="6" rx="11" ry="4.5" fill="#fff" stroke="#3f5f88" stroke-width="2"/><path d="M3 14C3 17 8 19 14 19C20 19 25 17 25 14" fill="none" stroke="#3f5f88" stroke-width="2"/></svg>
<div class="row" style="left:174px;top:509px">topology</div>
<svg style="left:15px;top:560px" width="15" height="18"><path d="M0 0V18L15 9Z" fill="#8a8a8a"/></svg>
<svg style="left:48px;top:552px" width="36" height="34" viewBox="0 0 36 34"><path d="M2 2C12 1 26 4 34 16L12 22L2 33C8 22 8 12 2 2Z" fill="#5b8bc8" stroke="#2a4d7c" stroke-width="1.6" stroke-linejoin="round"/><path d="M10 3C15 10 15 16 12 22M18 5C23 12 22 16 20 20M26 9C29 13 29 16 27 18" fill="none" stroke="#2a4d7c" stroke-width="1.4"/></svg>
<div class="row" style="left:94px;top:549px">MSSQL</div>
<svg style="left:50px;top:593px" width="32" height="10"><path d="M1 6Q1 1 6 1H26Q31 1 31 6V10H1Z" fill="#6a9ad8"/></svg>
</div>
<div class="ptitle" style="top:886px;height:43px;line-height:45px">Layers</div><svg style="left:2px;top:892px" width="70" height="30" viewBox="0 0 70 30"><circle cx="16" cy="15" r="12.5" fill="#3c3c3c"/><path d="M10 9L22 21M22 9L10 21" stroke="#e6e6e6" stroke-width="4.2"/><circle cx="52" cy="15" r="12.5" fill="#3c3c3c"/><rect x="48.5" y="9.5" width="10" height="8" fill="none" stroke="#e6e6e6" stroke-width="2"/><rect x="44.5" y="13.5" width="10" height="8" fill="#3c3c3c" stroke="#e6e6e6" stroke-width="2"/></svg>
<div class="ptool" style="top:931px;height:56px"></div>
<svg style="left:10px;top:943px" width="36" height="32" viewBox="0 0 36 32"><path d="M3 18L14 8L22 12L8 24Z" fill="#e83a3a"/><path d="M5 12L14 5L22 9L12 16Z" fill="#f0d020"/><path d="M2 14L8 10L16 22L9 26Z" fill="#4a78c8" opacity=".9"/><path d="M20 15L31 4" stroke="#d89030" stroke-width="3.4" stroke-linecap="round"/><path d="M12 17L21 12L25 18L17 25Z" fill="#e8c078" stroke="#a87830" stroke-width="1.2"/></svg>
<svg style="left:72px;top:941px" width="34" height="36" viewBox="0 0 34 36"><rect x="3" y="12" width="18" height="20" fill="#e6e6e6" stroke="#8a8a8a" stroke-width="1.6"/><rect x="8" y="6" width="18" height="20" fill="#ededed" stroke="#8a8a8a" stroke-width="1.6"/><path d="M14 18V6C14 1 21 1 21 6V16" fill="none" stroke="#3f6ea8" stroke-width="2"/><rect x="18" y="20" width="12" height="12" rx="2.4" fill="#5a9a5e"/><path d="M20.5 26.0H27.5M24.0 22.5V29.5" stroke="#fff" stroke-width="2.2" stroke-linecap="round"/></svg>
<svg style="left:130px;top:946px" width="42" height="30" viewBox="0 0 42 30"><path d="M2 14C10 3 24 3 32 14C24 24 10 24 2 14Z" fill="#fff" stroke="#8a8a8a" stroke-width="1.8"/><path d="M4 8C12 1 24 1 30 7" fill="none" stroke="#8a8a8a" stroke-width="1.4"/><circle cx="17" cy="14" r="6.5" fill="#6a94cf" stroke="#3f6ea8" stroke-width="1"/><circle cx="17" cy="13" r="2.6" fill="#123"/><path d="M26 19H38L32 28Z" fill="#222"/></svg>
<svg style="left:192px;top:941px" width="32" height="34" viewBox="0 0 32 34"><path d="M2 2H30V7L19 18V31L13 28V18L2 7Z" fill="#6f9bd1" stroke="#3e6b9c" stroke-width="1.6" stroke-linejoin="round"/><rect x="3" y="2.5" width="26" height="4" fill="#f5dc3c"/></svg>
<svg style="left:262px;top:937px" width="58" height="42" viewBox="0 0 58 42"><text x="3" y="26" font-family="Liberation Serif,serif" font-size="34" fill="#6a3a7a">ε</text><path d="M18 20H34L29 27V36H23V27Z" fill="#cfcfcf" stroke="#9a9a9a" stroke-width="1"/><path d="M37 24H52L44.5 36Z" fill="#6e6e6e"/></svg>
<svg style="left:336px;top:940px" width="34" height="32" viewBox="0 0 34 32"><path d="M3 4V27M3 4H28M3 13H11M3 25H11" stroke="#9a9a9a" stroke-width="1.6" fill="none"/><rect x="9" y="9" width="7" height="7" fill="#f39a1e"/><rect x="9" y="21" width="7" height="7" fill="#f39a1e"/><rect x="11" y="11" width="3" height="3" fill="#fde2b0"/><rect x="11" y="23" width="3" height="3" fill="#fde2b0"/><path d="M21 2V18H15L24 29L33 18H27V2Z" fill="#5a8ac6" stroke="#2f5f98" stroke-width="1.4" stroke-linejoin="round"/></svg>
<svg style="left:396px;top:940px" width="34" height="32" viewBox="0 0 34 32"><path d="M3 4V27M3 4H28M3 13H11M3 25H11" stroke="#9a9a9a" stroke-width="1.6" fill="none"/><rect x="9" y="9" width="7" height="7" fill="#f39a1e"/><rect x="9" y="21" width="7" height="7" fill="#f39a1e"/><rect x="11" y="11" width="3" height="3" fill="#fde2b0"/><rect x="11" y="23" width="3" height="3" fill="#fde2b0"/><path d="M21 28V12H15L24 1L33 12H27V28Z" fill="#5a8ac6" stroke="#2f5f98" stroke-width="1.4" stroke-linejoin="round"/></svg>
<svg style="left:456px;top:942px" width="36" height="32" viewBox="0 0 36 32"><rect x="3" y="3" width="22" height="22" fill="#ededed" stroke="#8a8a8a" stroke-width="2"/><rect x="19" y="19" width="13" height="11" rx="3" fill="#e8364a"/><path d="M22 24.5H29" stroke="#fff" stroke-width="2.6"/></svg>
<div class="tree" style="top:986px;height:476px">
<div style="left:0;top:0;width:584px;height:43px;background:#d4d4d4"></div>
<div class="cb" style="left:53px;top:8px"></div><svg style="left:57px;top:13px" width="22" height="20" viewBox="0 0 22 20"><path d="M3 10L8.5 17L19 2" fill="none" stroke="#2a2a2a" stroke-width="2.6"/></svg>
<svg style="left:116px;top:15px" width="14" height="14"><circle cx="7" cy="7" r="4.2" fill="#8fdc5c" stroke="#4a5a4a" stroke-width="1.6"/></svg>
<div class="lrow" style="left:152px;top:0px;text-decoration:underline;text-decoration-thickness:2px;text-underline-offset:4px">Landslide_Events</div>
<div class="cb" style="left:53px;top:52px"></div><svg style="left:57px;top:57px" width="22" height="20" viewBox="0 0 22 20"><path d="M3 10L8.5 17L19 2" fill="none" stroke="#2a2a2a" stroke-width="2.6"/></svg>
<div style="left:107px;top:50px;width:33px;height:33px;background:#b5709c;border:1.5px solid #4a4a4a"></div>
<div class="lrow" style="left:152px;top:44px">Landslide_Susceptibility</div>
<div class="cb" style="left:53px;top:96px"></div><svg style="left:57px;top:101px" width="22" height="20" viewBox="0 0 22 20"><path d="M3 10L8.5 17L19 2" fill="none" stroke="#2a2a2a" stroke-width="2.6"/></svg>
<div style="left:107px;top:94px;width:33px;height:33px;background:#d2bc6c;border:1.5px solid #4a4a4a"></div>
<div class="lrow" style="left:152px;top:88px">Landslide_Event_Perimeter</div>
</div>
<div class="status"></div>
<div class="inp" style="left:9px;top:1485px;width:398px;height:41px;border-color:#c6c6c6"></div>
<svg style="left:24px;top:1491px" width="30" height="30" viewBox="0 0 30 30"><circle cx="11" cy="11" r="8" fill="none" stroke="#8c8c8c" stroke-width="2.4"/><path d="M17 17L26 26" stroke="#8c8c8c" stroke-width="3"/></svg>
<div class="st" style="left:64px;top:1491px;color:#8a8a8a">Type to locate (⌘K)</div>
<div class="st" style="left:422px;top:1490px">1</div><div style="left:444px;top:1495px;width:2px;height:22px;background:#c06060"></div>
<div class="st" style="left:462px;top:1491px;width:88px;overflow:hidden"><span style="position:relative;left:-12px">oordinat</span></div>
<div class="inp" style="left:557px;top:1485px;width:232px;padding-left:17px;letter-spacing:1.1px">316753,960256</div>
<div class="btn" style="left:793px;top:1481px;width:52px;height:50px"></div><svg style="left:801px;top:1488px" width="36" height="36" viewBox="0 0 36 36"><ellipse cx="17" cy="17" rx="8" ry="12" fill="#fff" stroke="#222" stroke-width="2.4" transform="rotate(-25 17 17)"/><path d="M9 6L25 28M13 4L15 12" stroke="#222" stroke-width="2.2"/><circle cx="22" cy="25" r="3.5" fill="#fff" stroke="#222" stroke-width="1.6"/><circle cx="26" cy="22" r="6" fill="#c08090" opacity=".45"/><path d="M4 24l2 1M28 5l2-1M31 9l2 0" stroke="#222" stroke-width="1.6"/></svg>
<div class="st" style="left:862px;top:1491px;width:28px;overflow:hidden"><span style="position:relative;left:-8px">cal</span></div>
<div class="inp" style="left:891px;top:1485px;width:242px;height:41px;border-right:0">1:2,069,607</div>
<div style="left:1097px;top:1485px;width:37px;height:41px;border-radius:0 7px 7px 0;background:linear-gradient(#5aa7f8,#1e6cf0)"></div><svg style="left:1105px;top:1497px" width="22" height="16"><path d="M3 3L11 11L19 3" fill="none" stroke="#fff" stroke-width="3" stroke-linecap="round"/></svg>
<div class="btn" style="left:1135px;top:1479px;width:50px;height:52px"></div><svg style="left:1145px;top:1487px" width="30" height="36" viewBox="0 0 30 36"><path d="M7 18V11C7 3 23 3 23 11V18" fill="none" stroke="#a0a0a0" stroke-width="3.4"/><rect x="3" y="17" width="24" height="17" rx="2" fill="#5e5e5e"/></svg>
<div class="st" style="left:1203px;top:1491px;width:70px;overflow:hidden">agnifie</div>
<div class="inp" style="left:1281px;top:1485px;width:156px">100%</div>
<div class="spin" style="left:1445px;top:1484px"></div><svg style="left:1448px;top:1490px" width="18" height="36"><path d="M4 11L9 5L14 11M4 24L9 30L14 24" fill="none" stroke="#444" stroke-width="2.2"/></svg>
<div class="st" style="left:1488px;top:1491px;width:60px;overflow:hidden"><span style="position:relative;left:-9px">otatio</span></div>
<div class="inp" style="left:1565px;top:1485px;width:150px">0.0 °</div>
<div class="spin" style="left:1723px;top:1484px"></div><svg style="left:1726px;top:1490px" width="18" height="36"><path d="M4 11L9 5L14 11M4 24L9 30L14 24" fill="none" stroke="#444" stroke-width="2.2"/></svg>
<div style="left:1762px;top:1492px;width:28px;height:28px;border-radius:5px;background:linear-gradient(#55a4f8,#2071ee)"></div><svg style="left:1765px;top:1496px" width="22" height="20" viewBox="0 0 22 20"><path d="M3 10L8.5 17L19 2" fill="none" stroke="#fff" stroke-width="2.8"/></svg>
<div class="st" style="left:1798px;top:1491px">Render</div>
<div class="btn" style="left:1890px;top:1477px;width:210px;height:58px;border-color:#c8c8c8"></div>
<svg style="left:1900px;top:1491px" width="32" height="30" viewBox="0 0 32 30"><g fill="none" stroke="#666" stroke-width="1.6"><ellipse cx="16" cy="14" rx="13" ry="10"/><ellipse cx="16" cy="14" rx="6" ry="10"/><path d="M3 14H29M16 4V24M5 8.5H27M5 19.5H27"/></g><path d="M5 27H27" stroke="#666" stroke-width="1.6"/></svg>
<div class="st" style="left:1940px;top:1491px">EPSG:2157</div>
<div class="btn" style="left:2112px;top:1477px;width:52px;height:58px;border-color:#c8c8c8"></div><svg style="left:2120px;top:1488px" width="38" height="36" viewBox="0 0 38 36"><path d="M19 3C9 3 3 9 3 16C3 23 9 29 19 29C20 29 22 29 23 28.6C25 31 28 33 32 33C30 31 29 28 29 26C33 24 35 20 35 16C35 9 29 3 19 3Z" fill="#5a5a5a"/><circle cx="11" cy="16" r="2.6" fill="#fff"/><circle cx="19" cy="16" r="2.6" fill="#fff"/><circle cx="27" cy="16" r="2.6" fill="#fff"/></svg>
<svg class="mapsvg" width="1597" height="1275" viewBox="591 185 1597 1275" style="position:absolute;left:591px;top:185px">
<defs>
<clipPath id="irl"><polygon points="1557,222 1575,228 1596,236 1604,247 1622,254 1637,262 1638,270 1615,282 1600,296 1585,310 1572,321 1560,332 1554,354 1549,376 1541,397 1524,417 1510,424 1497,428 1480,422 1469,433 1478,444 1505,452 1497,463 1483,477 1458,480 1442,496 1426,502 1433,514 1455,538 1477,563 1504,580 1518,592 1532,604 1554,596 1581,602 1586,580 1603,566 1592,549 1611,527 1625,512 1641,522 1652,536 1658,555 1669,580 1685,580 1696,588 1696,610 1702,626 1726,618 1743,615 1762,610 1778,623 1791,637 1778,645 1754,637 1746,654 1751,673 1767,681 1767,703 1773,736 1784,755 1800,769 1795,796 1792,818 1806,829 1784,846 1800,862 1809,889 1811,924 1809,927 1817,947 1822,963 1811,982 1798,1004 1795,1023 1781,1048 1787,1065 1784,1087 1767,1114 1757,1141 1743,1144 1743,1155 1754,1163 1767,1177 1757,1196 1751,1191 1715,1198 1696,1185 1674,1191 1652,1213 1652,1196 1647,1180 1641,1202 1619,1213 1617,1204 1592,1210 1554,1215 1529,1226 1537,1235 1529,1254 1504,1270 1480,1287 1449,1295 1455,1303 1419,1317 1406,1300 1401,1311 1395,1327 1379,1343 1354,1352 1351,1371 1346,1363 1324,1368 1318,1379 1286,1379 1269,1393 1236,1396 1203,1409 1179,1412 1181,1393 1159,1404 1132,1409 1107,1417 1102,1406 1116,1398 1154,1371 1132,1382 1102,1387 1137,1365 1173,1346 1176,1335 1165,1338 1116,1357 1094,1365 1050,1371 1028,1371 1061,1360 1052,1349 1069,1338 1088,1327 1116,1311 1146,1290 1116,1300 1083,1313 1050,1321 1036,1313 1031,1300 1009,1300 995,1286 995,1275 1017,1267 1028,1250 1050,1236 1077,1228 1094,1215 1116,1203 1083,1214 1050,1211 1022,1217 978,1217 961,1230 962,1219 984,1206 989,1189 1006,1178 1022,1167 1044,1159 1072,1167 1088,1178 1116,1170 1099,1162 1105,1153 1110,1129 1089,1127 1089,1119 1116,1115 1143,1101 1140,1088 1154,1077 1181,1077 1214,1074 1255,1063 1280,1049 1307,1047 1275,1038 1275,1025 1264,1025 1258,1047 1242,1060 1203,1074 1181,1068 1165,1057 1137,1071 1094,1079 1094,1074 1143,1041 1154,1022 1173,1025 1181,1003 1187,981 1201,967 1181,964 1192,942 1203,923 1220,900 1242,907 1275,896 1269,884 1280,876 1269,865 1214,873 1176,878 1168,870 1127,873 1137,857 1154,846 1148,829 1137,840 1110,851 1105,837 1116,824 1094,824 1077,815 1050,821 1055,810 1072,804 1069,791 1055,780 1058,772 1083,769 1080,758 1094,758 1110,752 1105,736 1107,714 1132,706 1165,703 1151,692 1154,676 1140,667 1127,678 1102,684 1088,670 1077,654 1058,652 1047,645 1058,634 1077,629 1096,632 1110,645 1116,629 1099,615 1105,591 1096,588 1077,610 1072,596 1094,574 1077,563 1094,547 1116,555 1118,541 1135,532 1159,544 1181,541 1203,549 1212,541 1228,547 1236,571 1250,577 1264,552 1280,552 1294,563 1313,558 1335,563 1349,571 1343,560 1357,536 1338,541 1329,533 1350,515 1371,502 1404,498 1404,488 1415,469 1415,455 1398,455 1371,469 1368,455 1346,458 1327,450 1308,441 1310,428 1332,408 1360,403 1354,389 1382,384 1387,376 1373,362 1371,348 1352,345 1354,334 1371,337 1371,323 1393,310 1398,293 1420,291 1447,282 1453,271 1475,280 1478,269 1513,271 1516,255 1528,263 1535,252 1563,241"/>
<ellipse cx="1138" cy="906" rx="22" ry="5" transform="rotate(28 1138 906)"/>
<ellipse cx="1164" cy="922" rx="6" ry="4" transform="rotate(30 1164 922)"/>
<ellipse cx="1173" cy="928" rx="5" ry="4" transform="rotate(30 1173 928)"/>
<ellipse cx="1090" cy="697" rx="9" ry="7" transform="rotate(0 1090 697)"/>
<ellipse cx="1048" cy="754" rx="13" ry="5" transform="rotate(-10 1048 754)"/>
<ellipse cx="1070" cy="729" rx="6" ry="5" transform="rotate(-30 1070 729)"/>
<ellipse cx="1056" cy="598" rx="4" ry="9" transform="rotate(20 1056 598)"/>
<ellipse cx="1413" cy="257" rx="8" ry="3" transform="rotate(25 1413 257)"/>
<ellipse cx="1166" cy="1420" rx="7" ry="4" transform="rotate(-25 1166 1420)"/>
<ellipse cx="1811" cy="793" rx="4" ry="4" transform="rotate(0 1811 793)"/>
<ellipse cx="1803" cy="826" rx="4" ry="4" transform="rotate(0 1803 826)"/>
<ellipse cx="1029" cy="1328" rx="5" ry="3" transform="rotate(-20 1029 1328)"/>
<ellipse cx="974" cy="1312" rx="4" ry="2" transform="rotate(-20 974 1312)"/>
<ellipse cx="1352" cy="340" rx="6" ry="6" transform="rotate(0 1352 340)"/>
</clipPath>
<filter id="rag" filterUnits="userSpaceOnUse" x="930" y="190" width="920" height="1260" color-interpolation-filters="sRGB"><feTurbulence type="fractalNoise" baseFrequency="0.09" numOctaves="2" seed="4" result="t"/><feDisplacementMap in="SourceGraphic" in2="t" scale="9" xChannelSelector="R" yChannelSelector="G"/></filter>
<mask id="irlm" maskUnits="userSpaceOnUse" x="930" y="190" width="920" height="1260"><g filter="url(#rag)" fill="#fff"><polygon points="1557,222 1575,228 1596,236 1604,247 1622,254 1637,262 1638,270 1615,282 1600,296 1585,310 1572,321 1560,332 1554,354 1549,376 1541,397 1524,417 1510,424 1497,428 1480,422 1469,433 1478,444 1505,452 1497,463 1483,477 1458,480 1442,496 1426,502 1433,514 1455,538 1477,563 1504,580 1518,592 1532,604 1554,596 1581,602 1586,580 1603,566 1592,549 1611,527 1625,512 1641,522 1652,536 1658,555 1669,580 1685,580 1696,588 1696,610 1702,626 1726,618 1743,615 1762,610 1778,623 1791,637 1778,645 1754,637 1746,654 1751,673 1767,681 1767,703 1773,736 1784,755 1800,769 1795,796 1792,818 1806,829 1784,846 1800,862 1809,889 1811,924 1809,927 1817,947 1822,963 1811,982 1798,1004 1795,1023 1781,1048 1787,1065 1784,1087 1767,1114 1757,1141 1743,1144 1743,1155 1754,1163 1767,1177 1757,1196 1751,1191 1715,1198 1696,1185 1674,1191 1652,1213 1652,1196 1647,1180 1641,1202 1619,1213 1617,1204 1592,1210 1554,1215 1529,1226 1537,1235 1529,1254 1504,1270 1480,1287 1449,1295 1455,1303 1419,1317 1406,1300 1401,1311 1395,1327 1379,1343 1354,1352 1351,1371 1346,1363 1324,1368 1318,1379 1286,1379 1269,1393 1236,1396 1203,1409 1179,1412 1181,1393 1159,1404 1132,1409 1107,1417 1102,1406 1116,1398 1154,1371 1132,1382 1102,1387 1137,1365 1173,1346 1176,1335 1165,1338 1116,1357 1094,1365 1050,1371 1028,1371 1061,1360 1052,1349 1069,1338 1088,1327 1116,1311 1146,1290 1116,1300 1083,1313 1050,1321 1036,1313 1031,1300 1009,1300 995,1286 995,1275 1017,1267 1028,1250 1050,1236 1077,1228 1094,1215 1116,1203 1083,1214 1050,1211 1022,1217 978,1217 961,1230 962,1219 984,1206 989,1189 1006,1178 1022,1167 1044,1159 1072,1167 1088,1178 1116,1170 1099,1162 1105,1153 1110,1129 1089,1127 1089,1119 1116,1115 1143,1101 1140,1088 1154,1077 1181,1077 1214,1074 1255,1063 1280,1049 1307,1047 1275,1038 1275,1025 1264,1025 1258,1047 1242,1060 1203,1074 1181,1068 1165,1057 1137,1071 1094,1079 1094,1074 1143,1041 1154,1022 1173,1025 1181,1003 1187,981 1201,967 1181,964 1192,942 1203,923 1220,900 1242,907 1275,896 1269,884 1280,876 1269,865 1214,873 1176,878 1168,870 1127,873 1137,857 1154,846 1148,829 1137,840 1110,851 1105,837 1116,824 1094,824 1077,815 1050,821 1055,810 1072,804 1069,791 1055,780 1058,772 1083,769 1080,758 1094,758 1110,752 1105,736 1107,714 1132,706 1165,703 1151,692 1154,676 1140,667 1127,678 1102,684 1088,670 1077,654 1058,652 1047,645 1058,634 1077,629 1096,632 1110,645 1116,629 1099,615 1105,591 1096,588 1077,610 1072,596 1094,574 1077,563 1094,547 1116,555 1118,541 1135,532 1159,544 1181,541 1203,549 1212,541 1228,547 1236,571 1250,577 1264,552 1280,552 1294,563 1313,558 1335,563 1349,571 1343,560 1357,536 1338,541 1329,533 1350,515 1371,502 1404,498 1404,488 1415,469 1415,455 1398,455 1371,469 1368,455 1346,458 1327,450 1308,441 1310,428 1332,408 1360,403 1354,389 1382,384 1387,376 1373,362 1371,348 1352,345 1354,334 1371,337 1371,323 1393,310 1398,293 1420,291 1447,282 1453,271 1475,280 1478,269 1513,271 1516,255 1528,263 1535,252 1563,241"/>
<ellipse cx="1138" cy="906" rx="22" ry="5" transform="rotate(28 1138 906)"/>
<ellipse cx="1164" cy="922" rx="6" ry="4" transform="rotate(30 1164 922)"/>
<ellipse cx="1173" cy="928" rx="5" ry="4" transform="rotate(30 1173 928)"/>
<ellipse cx="1090" cy="697" rx="9" ry="7" transform="rotate(0 1090 697)"/>
<ellipse cx="1048" cy="754" rx="13" ry="5" transform="rotate(-10 1048 754)"/>
<ellipse cx="1070" cy="729" rx="6" ry="5" transform="rotate(-30 1070 729)"/>
<ellipse cx="1056" cy="598" rx="4" ry="9" transform="rotate(20 1056 598)"/>
<ellipse cx="1413" cy="257" rx="8" ry="3" transform="rotate(25 1413 257)"/>
<ellipse cx="1166" cy="1420" rx="7" ry="4" transform="rotate(-25 1166 1420)"/>
<ellipse cx="1811" cy="793" rx="4" ry="4" transform="rotate(0 1811 793)"/>
<ellipse cx="1803" cy="826" rx="4" ry="4" transform="rotate(0 1803 826)"/>
<ellipse cx="1029" cy="1328" rx="5" ry="3" transform="rotate(-20 1029 1328)"/>
<ellipse cx="974" cy="1312" rx="4" ry="2" transform="rotate(-20 974 1312)"/>
<ellipse cx="1352" cy="340" rx="6" ry="6" transform="rotate(0 1352 340)"/>
</g></mask>
<filter id="tex" filterUnits="userSpaceOnUse" x="940" y="200" width="900" height="1240" color-interpolation-filters="sRGB"><feTurbulence type="fractalNoise" baseFrequency="0.08" numOctaves="3" seed="11" result="n"/><feTurbulence type="fractalNoise" baseFrequency="0.3" numOctaves="1" seed="5" result="h"/><feColorMatrix in="n" type="matrix" values="1 0 0 0 0  1 0 0 0 0  1 0 0 0 0  0 0 0 0 1" result="ng"/><feColorMatrix in="h" type="matrix" values="1 0 0 0 0  1 0 0 0 0  1 0 0 0 0  0 0 0 0 1" result="hg"/><feComposite in="ng" in2="hg" operator="arithmetic" k1="0" k2="1.5" k3="1.1" k4="-0.8" result="nn"/><feComposite in="SourceGraphic" in2="nn" operator="arithmetic" k1="0" k2="0.8" k3="1.0" k4="-0.4" result="s"/><feComponentTransfer in="s"><feFuncR type="discrete" tableValues="0.165 0.165 0.165 0.165 0.165 0.165 0.301 0.437 0.574 0.710 0.710 0.710 0.710 0.710 0.710 0.710"/><feFuncG type="discrete" tableValues="0.141 0.141 0.141 0.141 0.141 0.141 0.216 0.290 0.365 0.439 0.439 0.439 0.439 0.439 0.439 0.439"/><feFuncB type="discrete" tableValues="0.149 0.149 0.149 0.149 0.149 0.149 0.265 0.380 0.496 0.612 0.612 0.612 0.612 0.612 0.612 0.612"/><feFuncA type="linear" slope="0" intercept="1"/></feComponentTransfer></filter>
<radialGradient id="gl"><stop offset="0" stop-color="#fff" stop-opacity="1"/><stop offset="0.6" stop-color="#fff" stop-opacity="0.7"/><stop offset="1" stop-color="#fff" stop-opacity="0"/></radialGradient>
<radialGradient id="gd"><stop offset="0" stop-color="#000" stop-opacity="1"/><stop offset="0.6" stop-color="#000" stop-opacity="0.7"/><stop offset="1" stop-color="#000" stop-opacity="0"/></radialGradient>
</defs>
<g mask="url(#irlm)"><g filter="url(#tex)">
<rect x="900" y="180" width="1000" height="1300" fill="#474747"/>
<ellipse cx="1492" cy="732" rx="165" ry="115" transform="rotate(0 1492 732)" fill="url(#gl)" opacity="0.778"/>
<ellipse cx="1324" cy="865" rx="110" ry="75" transform="rotate(0 1324 865)" fill="url(#gl)" opacity="0.694"/>
<ellipse cx="1573" cy="889" rx="230" ry="80" transform="rotate(5 1573 889)" fill="url(#gl)" opacity="0.444"/>
<ellipse cx="1316" cy="680" rx="100" ry="75" transform="rotate(0 1316 680)" fill="url(#gl)" opacity="0.417"/>
<ellipse cx="1260" cy="1161" rx="150" ry="110" transform="rotate(-15 1260 1161)" fill="url(#gl)" opacity="0.319"/>
<ellipse cx="1168" cy="1101" rx="50" ry="28" transform="rotate(-15 1168 1101)" fill="url(#gl)" opacity="0.708"/>
<ellipse cx="1709" cy="1113" rx="70" ry="90" transform="rotate(0 1709 1113)" fill="url(#gl)" opacity="0.361"/>
<ellipse cx="1581" cy="1089" rx="90" ry="90" transform="rotate(0 1581 1089)" fill="url(#gl)" opacity="0.278"/>
<ellipse cx="1388" cy="1321" rx="150" ry="50" transform="rotate(-10 1388 1321)" fill="url(#gl)" opacity="0.319"/>
<ellipse cx="1548" cy="1201" rx="100" ry="50" transform="rotate(0 1548 1201)" fill="url(#gl)" opacity="0.278"/>
<ellipse cx="1388" cy="552" rx="45" ry="32" transform="rotate(-25 1388 552)" fill="url(#gl)" opacity="0.444"/>
<ellipse cx="1589" cy="360" rx="40" ry="100" transform="rotate(20 1589 360)" fill="url(#gl)" opacity="0.264"/>
<ellipse cx="1060" cy="1210" rx="70" ry="18" transform="rotate(-20 1060 1210)" fill="url(#gl)" opacity="0.319"/>
<ellipse cx="1076" cy="1277" rx="50" ry="30" transform="rotate(-20 1076 1277)" fill="url(#gl)" opacity="0.264"/>
<ellipse cx="1460" cy="400" rx="150" ry="180" transform="rotate(15 1460 400)" fill="url(#gd)" opacity="0.857"/>
<ellipse cx="1124" cy="624" rx="90" ry="110" transform="rotate(0 1124 624)" fill="url(#gd)" opacity="-0.071"/>
<ellipse cx="1100" cy="760" rx="80" ry="60" transform="rotate(0 1100 760)" fill="url(#gd)" opacity="0.643"/>
<ellipse cx="1124" cy="833" rx="110" ry="70" transform="rotate(0 1124 833)" fill="url(#gd)" opacity="0.786"/>
<ellipse cx="1220" cy="969" rx="70" ry="100" transform="rotate(0 1220 969)" fill="url(#gd)" opacity="0.643"/>
<ellipse cx="1148" cy="1321" rx="200" ry="100" transform="rotate(-25 1148 1321)" fill="url(#gd)" opacity="0.714"/>
<ellipse cx="1749" cy="937" rx="60" ry="100" transform="rotate(0 1749 937)" fill="url(#gd)" opacity="0.643"/>
<ellipse cx="1645" cy="584" rx="100" ry="80" transform="rotate(0 1645 584)" fill="url(#gd)" opacity="0.464"/>
<ellipse cx="1452" cy="1009" rx="100" ry="55" transform="rotate(0 1452 1009)" fill="url(#gd)" opacity="0.464"/>
<ellipse cx="1284" cy="1265" rx="120" ry="45" transform="rotate(0 1284 1265)" fill="url(#gd)" opacity="0.571"/>
<ellipse cx="1749" cy="624" rx="50" ry="40" transform="rotate(0 1749 624)" fill="url(#gd)" opacity="0.714"/>
<ellipse cx="1452" cy="1189" rx="90" ry="35" transform="rotate(0 1452 1189)" fill="url(#gd)" opacity="0.464"/>
<ellipse cx="1573" cy="1241" rx="40" ry="30" transform="rotate(0 1573 1241)" fill="url(#gd)" opacity="0.571"/>
<ellipse cx="1685" cy="1049" rx="25" ry="60" transform="rotate(0 1685 1049)" fill="url(#gd)" opacity="0.571"/>
<ellipse cx="1713" cy="728" rx="85" ry="95" transform="rotate(0 1713 728)" fill="url(#gd)" opacity="0.393"/>
<ellipse cx="1180" cy="1049" rx="40" ry="40" transform="rotate(0 1180 1049)" fill="url(#gd)" opacity="0.286"/>
</g></g>
<polyline points="1530,270 1541,296 1536,315 1524,334 1513,346" fill="none" stroke="#fff" stroke-width="4" stroke-linecap="round" stroke-linejoin="round"/>
<polyline points="1486,290 1490,310 1496,322" fill="none" stroke="#fff" stroke-width="2.5" stroke-linecap="round" stroke-linejoin="round"/>
<g clip-path="url(#irl)" stroke="#5a3a50" stroke-opacity="0.55" stroke-width="1.5"><line x1="1389" y1="600" x2="1389" y2="1300"/><line x1="1606" y1="560" x2="1606" y2="1230"/><line x1="1200" y1="823" x2="1800" y2="823"/><line x1="1174" y1="1040" x2="1174" y2="1250"/></g>
<g fill="#96da66" stroke="#262e21" stroke-width="2">
<circle cx="1757.2" cy="888.7" r="5"/>
<circle cx="1786.4" cy="879.6" r="5"/>
<circle cx="1760.4" cy="893.1" r="5"/>
<circle cx="1797.1" cy="881.0" r="5"/>
<circle cx="1778.3" cy="869.2" r="5"/>
<circle cx="1747.2" cy="875.0" r="5"/>
<circle cx="1783.3" cy="862.0" r="5"/>
<circle cx="1796.2" cy="869.0" r="5"/>
<circle cx="1761.4" cy="860.8" r="5"/>
<circle cx="1801.3" cy="885.5" r="5"/>
<circle cx="1749.1" cy="873.1" r="5"/>
<circle cx="1777.8" cy="864.0" r="5"/>
<circle cx="1756.6" cy="894.2" r="5"/>
<circle cx="1754.7" cy="898.9" r="5"/>
<circle cx="1775.1" cy="882.7" r="5"/>
<circle cx="1768.3" cy="879.8" r="5"/>
<circle cx="1758.6" cy="860.6" r="5"/>
<circle cx="1795.4" cy="868.0" r="5"/>
<circle cx="1777.3" cy="925.2" r="5"/>
<circle cx="1765.3" cy="920.5" r="5"/>
<circle cx="1755.5" cy="919.3" r="5"/>
<circle cx="1729.9" cy="910.1" r="5"/>
<circle cx="1769.3" cy="900.2" r="5"/>
<circle cx="1774.7" cy="925.0" r="5"/>
<circle cx="1745.9" cy="906.1" r="5"/>
<circle cx="1748.3" cy="906.9" r="5"/>
<circle cx="1778.7" cy="906.9" r="5"/>
<circle cx="1724.5" cy="896.4" r="5"/>
<circle cx="1737.7" cy="951.5" r="5"/>
<circle cx="1741.5" cy="965.9" r="5"/>
<circle cx="1718.5" cy="958.1" r="5"/>
<circle cx="1742.0" cy="958.9" r="5"/>
<circle cx="1715.6" cy="933.5" r="5"/>
<circle cx="1727.4" cy="975.9" r="5"/>
<circle cx="1727.3" cy="957.4" r="5"/>
<circle cx="1724.5" cy="929.8" r="5"/>
<circle cx="1757.4" cy="945.0" r="5"/>
<circle cx="1750.8" cy="961.9" r="5"/>
<circle cx="1731.5" cy="979.4" r="5"/>
<circle cx="1770.3" cy="957.1" r="5"/>
<circle cx="1764.8" cy="951.5" r="5"/>
<circle cx="1729.3" cy="937.8" r="5"/>
<circle cx="1757.2" cy="951.1" r="5"/>
<circle cx="1721.1" cy="940.2" r="5"/>
<circle cx="1732.4" cy="933.6" r="5"/>
<circle cx="1707.9" cy="942.9" r="5"/>
<circle cx="1755.2" cy="950.8" r="5"/>
<circle cx="1739.8" cy="964.8" r="5"/>
<circle cx="1761.7" cy="968.5" r="5"/>
<circle cx="1764.7" cy="957.7" r="5"/>
<circle cx="1732.8" cy="956.5" r="5"/>
<circle cx="1762.5" cy="941.2" r="5"/>
<circle cx="1740.4" cy="939.5" r="5"/>
<circle cx="1751.0" cy="977.4" r="5"/>
<circle cx="1704.6" cy="957.2" r="5"/>
<circle cx="1748.1" cy="971.7" r="5"/>
<circle cx="1743.9" cy="938.4" r="5"/>
<circle cx="1731.4" cy="977.7" r="5"/>
<circle cx="1704.8" cy="949.0" r="5"/>
<circle cx="1748.9" cy="931.1" r="5"/>
<circle cx="1151.0" cy="586.4" r="5"/>
<circle cx="1149.8" cy="579.8" r="5"/>
<circle cx="1141.3" cy="577.6" r="5"/>
<circle cx="1146.8" cy="610.7" r="5"/>
<circle cx="1151.3" cy="568.9" r="5"/>
<circle cx="1155.5" cy="621.1" r="5"/>
<circle cx="1157.1" cy="615.8" r="5"/>
<circle cx="1137.2" cy="595.2" r="5"/>
<circle cx="1138.7" cy="614.1" r="5"/>
<circle cx="1141.6" cy="610.8" r="5"/>
<circle cx="1143.6" cy="609.9" r="5"/>
<circle cx="1145.2" cy="568.6" r="5"/>
<circle cx="1171.2" cy="640.1" r="5"/>
<circle cx="1207.1" cy="639.6" r="5"/>
<circle cx="1179.2" cy="648.8" r="5"/>
<circle cx="1210.4" cy="632.5" r="5"/>
<circle cx="1186.1" cy="647.3" r="5"/>
<circle cx="1195.4" cy="663.8" r="5"/>
<circle cx="1165.7" cy="654.2" r="5"/>
<circle cx="1180.8" cy="649.2" r="5"/>
<circle cx="1148.5" cy="658.3" r="5"/>
<circle cx="1212.4" cy="641.8" r="5"/>
<circle cx="1166.3" cy="664.8" r="5"/>
<circle cx="1151.5" cy="631.7" r="5"/>
<circle cx="1149.1" cy="658.3" r="5"/>
<circle cx="1197.2" cy="645.1" r="5"/>
<circle cx="1187.5" cy="629.7" r="5"/>
<circle cx="1189.1" cy="644.9" r="5"/>
<circle cx="1180.2" cy="643.0" r="5"/>
<circle cx="1172.1" cy="637.1" r="5"/>
<circle cx="1147.4" cy="644.6" r="5"/>
<circle cx="1161.3" cy="654.4" r="5"/>
<circle cx="1117.4" cy="667.5" r="5"/>
<circle cx="1088.5" cy="643.6" r="5"/>
<circle cx="1082.8" cy="655.9" r="5"/>
<circle cx="1102.5" cy="679.2" r="5"/>
<circle cx="1091.4" cy="667.1" r="5"/>
<circle cx="1123.2" cy="670.2" r="5"/>
<circle cx="1102.1" cy="669.2" r="5"/>
<circle cx="1105.4" cy="674.1" r="5"/>
<circle cx="1107.9" cy="665.5" r="5"/>
<circle cx="1138.1" cy="580.8" r="5"/>
<circle cx="1149.6" cy="565.4" r="5"/>
<circle cx="1185.6" cy="583.1" r="5"/>
<circle cx="1143.6" cy="549.9" r="5"/>
<circle cx="1142.8" cy="582.1" r="5"/>
<circle cx="1178.9" cy="557.6" r="5"/>
<circle cx="1126.9" cy="582.8" r="5"/>
<circle cx="1145.5" cy="566.7" r="5"/>
<circle cx="1173.9" cy="547.3" r="5"/>
<circle cx="1183.5" cy="752.7" r="5"/>
<circle cx="1133.3" cy="780.0" r="5"/>
<circle cx="1126.0" cy="771.4" r="5"/>
<circle cx="1129.4" cy="767.1" r="5"/>
<circle cx="1135.0" cy="755.7" r="5"/>
<circle cx="1182.7" cy="760.3" r="5"/>
<circle cx="1146.5" cy="768.1" r="5"/>
<circle cx="1135.2" cy="745.1" r="5"/>
<circle cx="1142.7" cy="750.2" r="5"/>
<circle cx="1182.3" cy="772.6" r="5"/>
<circle cx="1116.4" cy="762.1" r="5"/>
<circle cx="1117.8" cy="767.6" r="5"/>
<circle cx="1165.4" cy="748.5" r="5"/>
<circle cx="1115.5" cy="764.3" r="5"/>
<circle cx="1121.8" cy="752.1" r="5"/>
<circle cx="1147.7" cy="782.5" r="5"/>
<circle cx="1141.6" cy="743.0" r="5"/>
<circle cx="1172.0" cy="778.8" r="5"/>
<circle cx="1153.1" cy="738.6" r="5"/>
<circle cx="1128.5" cy="757.0" r="5"/>
<circle cx="1154.7" cy="747.7" r="5"/>
<circle cx="1172.8" cy="779.9" r="5"/>
<circle cx="1116.3" cy="766.3" r="5"/>
<circle cx="1168.8" cy="775.5" r="5"/>
<circle cx="1173.7" cy="767.5" r="5"/>
<circle cx="1159.7" cy="760.5" r="5"/>
<circle cx="1172.6" cy="753.6" r="5"/>
<circle cx="1134.4" cy="754.4" r="5"/>
<circle cx="1136.5" cy="768.6" r="5"/>
<circle cx="1119.9" cy="762.6" r="5"/>
<circle cx="1163.8" cy="745.9" r="5"/>
<circle cx="1134.4" cy="739.1" r="5"/>
<circle cx="1366.4" cy="535.3" r="5"/>
<circle cx="1407.6" cy="542.7" r="5"/>
<circle cx="1423.6" cy="537.3" r="5"/>
<circle cx="1390.1" cy="544.5" r="5"/>
<circle cx="1410.6" cy="536.7" r="5"/>
<circle cx="1386.5" cy="537.0" r="5"/>
<circle cx="1404.2" cy="520.2" r="5"/>
<circle cx="1409.4" cy="535.2" r="5"/>
<circle cx="1374.4" cy="552.0" r="5"/>
<circle cx="1407.5" cy="522.2" r="5"/>
<circle cx="1413.8" cy="554.4" r="5"/>
<circle cx="1398.1" cy="554.7" r="5"/>
<circle cx="1426.1" cy="530.3" r="5"/>
<circle cx="1386.5" cy="540.8" r="5"/>
<circle cx="1461.3" cy="606.1" r="5"/>
<circle cx="1465.1" cy="572.2" r="5"/>
<circle cx="1492.4" cy="593.6" r="5"/>
<circle cx="1487.6" cy="574.8" r="5"/>
<circle cx="1477.5" cy="605.2" r="5"/>
<circle cx="1487.7" cy="583.7" r="5"/>
<circle cx="1411.0" cy="586.1" r="5"/>
<circle cx="1420.1" cy="593.8" r="5"/>
<circle cx="1481.2" cy="583.6" r="5"/>
<circle cx="1443.6" cy="596.1" r="5"/>
<circle cx="1423.2" cy="569.1" r="5"/>
<circle cx="1492.1" cy="592.8" r="5"/>
<circle cx="1488.9" cy="592.3" r="5"/>
<circle cx="1414.8" cy="576.7" r="5"/>
<circle cx="1443.7" cy="599.5" r="5"/>
<circle cx="1477.0" cy="605.8" r="5"/>
<circle cx="1465.5" cy="577.4" r="5"/>
<circle cx="1444.3" cy="584.5" r="5"/>
<circle cx="1450.0" cy="578.1" r="5"/>
<circle cx="1454.6" cy="589.2" r="5"/>
<circle cx="1459.3" cy="608.8" r="5"/>
<circle cx="1473.7" cy="604.7" r="5"/>
<circle cx="1466.8" cy="596.1" r="5"/>
<circle cx="1421.9" cy="576.0" r="5"/>
<circle cx="1473.5" cy="609.3" r="5"/>
<circle cx="1449.4" cy="566.1" r="5"/>
<circle cx="1037.9" cy="1204.4" r="5"/>
<circle cx="1055.0" cy="1188.3" r="5"/>
<circle cx="1040.4" cy="1195.7" r="5"/>
<circle cx="1068.0" cy="1198.5" r="5"/>
<circle cx="1103.2" cy="1201.1" r="5"/>
<circle cx="1038.5" cy="1179.0" r="5"/>
<circle cx="1092.2" cy="1202.9" r="5"/>
<circle cx="1111.5" cy="1176.7" r="5"/>
<circle cx="1072.6" cy="1174.4" r="5"/>
<circle cx="1098.7" cy="1179.7" r="5"/>
<circle cx="1114.6" cy="1254.0" r="5"/>
<circle cx="1057.1" cy="1246.2" r="5"/>
<circle cx="1091.7" cy="1290.7" r="5"/>
<circle cx="1057.0" cy="1288.4" r="5"/>
<circle cx="1071.6" cy="1285.1" r="5"/>
<circle cx="1075.7" cy="1245.0" r="5"/>
<circle cx="1116.3" cy="1264.4" r="5"/>
<circle cx="1045.3" cy="1305.5" r="5"/>
<circle cx="1111.2" cy="1229.9" r="5"/>
<circle cx="1119.9" cy="1280.3" r="5"/>
<circle cx="1085.0" cy="1272.1" r="5"/>
<circle cx="1149.3" cy="1260.9" r="5"/>
<circle cx="1358.0" cy="434.2" r="5"/>
<circle cx="1340.1" cy="426.4" r="5"/>
<circle cx="1365.8" cy="434.2" r="5"/>
<circle cx="1346.2" cy="430.9" r="5"/>
<circle cx="1330.8" cy="438.3" r="5"/>
<circle cx="1414.6" cy="412.4" r="5"/>
<circle cx="1428.1" cy="401.0" r="5"/>
<circle cx="1432.2" cy="410.7" r="5"/>
<circle cx="1416.7" cy="408.2" r="5"/>
<circle cx="1419.1" cy="416.6" r="5"/>
<circle cx="1657.7" cy="285.8" r="5"/>
<circle cx="1697.8" cy="307.8" r="5"/>
<circle cx="1757.8" cy="285.8" r="5"/>
<circle cx="1773.7" cy="297.3" r="5"/>
<circle cx="1764.1" cy="307.8" r="5"/>
<circle cx="1762.2" cy="306.9" r="5"/>
<circle cx="1777.8" cy="321.5" r="5"/>
<circle cx="1818.1" cy="348.3" r="5"/>
<circle cx="1653.6" cy="355.7" r="5"/>
<circle cx="1751.8" cy="401.8" r="5"/>
<circle cx="1590.0" cy="515.3" r="5"/>
<circle cx="1572.2" cy="561.4" r="5"/>
<circle cx="1749.9" cy="593.5" r="5"/>
<circle cx="1745.7" cy="611.3" r="5"/>
<circle cx="1405.7" cy="295.4" r="5"/>
<circle cx="1339.9" cy="418.0" r="5"/>
<circle cx="1345.4" cy="429.0" r="5"/>
<circle cx="1352.0" cy="437.2" r="5"/>
<circle cx="1352.0" cy="444.0" r="5"/>
<circle cx="1361.9" cy="427.6" r="5"/>
<circle cx="1370.1" cy="423.5" r="5"/>
<circle cx="1377.5" cy="421.6" r="5"/>
<circle cx="1375.6" cy="433.9" r="5"/>
<circle cx="1379.4" cy="440.7" r="5"/>
<circle cx="1365.2" cy="435.8" r="5"/>
<circle cx="1329.5" cy="443.5" r="5"/>
<circle cx="1315.8" cy="437.5" r="5"/>
<circle cx="1435.9" cy="396.1" r="5"/>
<circle cx="1439.2" cy="402.9" r="5"/>
<circle cx="1441.9" cy="408.4" r="5"/>
<circle cx="1431.0" cy="412.5" r="5"/>
<circle cx="1422.7" cy="416.6" r="5"/>
<circle cx="1417.3" cy="418.8" r="5"/>
<circle cx="1426.0" cy="421.6" r="5"/>
<circle cx="1434.3" cy="401.5" r="5"/>
<circle cx="1463.9" cy="419.4" r="5"/>
<circle cx="1459.8" cy="426.2" r="5"/>
<circle cx="1437.8" cy="445.4" r="5"/>
<circle cx="1427.7" cy="459.1" r="5"/>
<circle cx="1280.2" cy="611.3" r="5"/>
<circle cx="1298.0" cy="609.9" r="5"/>
<circle cx="1405.9" cy="515.4" r="5"/>
<circle cx="1425.8" cy="518.1" r="5"/>
<circle cx="1414.1" cy="519.6" r="5"/>
<circle cx="1399.9" cy="521.8" r="5"/>
<circle cx="1386.0" cy="523.7" r="5"/>
<circle cx="1372.9" cy="523.9" r="5"/>
<circle cx="1377.3" cy="529.9" r="5"/>
<circle cx="1366.0" cy="534.1" r="5"/>
<circle cx="1397.9" cy="533.6" r="5"/>
<circle cx="1414.1" cy="531.7" r="5"/>
<circle cx="1388.0" cy="539.9" r="5"/>
<circle cx="1373.9" cy="540.4" r="5"/>
<circle cx="1375.4" cy="547.7" r="5"/>
<circle cx="1386.0" cy="548.6" r="5"/>
<circle cx="1402.0" cy="551.0" r="5"/>
<circle cx="1388.0" cy="554.9" r="5"/>
<circle cx="1407.8" cy="557.8" r="5"/>
<circle cx="1430.1" cy="567.5" r="5"/>
<circle cx="1441.7" cy="567.5" r="5"/>
<circle cx="1454.8" cy="565.6" r="5"/>
<circle cx="1446.6" cy="561.7" r="5"/>
<circle cx="1432.1" cy="561.2" r="5"/>
<circle cx="1466.9" cy="573.8" r="5"/>
<circle cx="1477.6" cy="573.8" r="5"/>
<circle cx="1487.8" cy="571.4" r="5"/>
<circle cx="1496.0" cy="581.6" r="5"/>
<circle cx="1483.9" cy="585.9" r="5"/>
<circle cx="1492.6" cy="589.8" r="5"/>
<circle cx="1460.2" cy="585.7" r="5"/>
<circle cx="1450.0" cy="577.7" r="5"/>
<circle cx="1439.8" cy="581.1" r="5"/>
<circle cx="1419.9" cy="577.7" r="5"/>
<circle cx="1432.1" cy="576.2" r="5"/>
<circle cx="1437.9" cy="587.9" r="5"/>
<circle cx="1388.0" cy="577.7" r="5"/>
<circle cx="1359.9" cy="583.8" r="5"/>
<circle cx="1405.9" cy="593.5" r="5"/>
<circle cx="1416.1" cy="597.6" r="5"/>
<circle cx="1407.8" cy="602.4" r="5"/>
<circle cx="1411.7" cy="605.8" r="5"/>
<circle cx="1425.8" cy="605.8" r="5"/>
<circle cx="1418.0" cy="612.1" r="5"/>
<circle cx="1437.9" cy="611.9" r="5"/>
<circle cx="1425.8" cy="618.4" r="5"/>
<circle cx="1417.5" cy="618.9" r="5"/>
<circle cx="1453.9" cy="602.9" r="5"/>
<circle cx="1464.0" cy="607.7" r="5"/>
<circle cx="1471.8" cy="599.5" r="5"/>
<circle cx="1479.1" cy="596.6" r="5"/>
<circle cx="1486.8" cy="597.6" r="5"/>
<circle cx="1454.8" cy="611.1" r="5"/>
<circle cx="1457.7" cy="617.9" r="5"/>
<circle cx="1449.0" cy="615.0" r="5"/>
<circle cx="1478.6" cy="608.7" r="5"/>
<circle cx="1473.2" cy="614.0" r="5"/>
<circle cx="1515.9" cy="598.0" r="5"/>
<circle cx="1386.0" cy="629.5" r="5"/>
<circle cx="1093.9" cy="553.9" r="5"/>
<circle cx="1123.7" cy="545.2" r="5"/>
<circle cx="1134.4" cy="537.1" r="5"/>
<circle cx="1149.5" cy="543.3" r="5"/>
<circle cx="1123.7" cy="561.7" r="5"/>
<circle cx="1141.7" cy="565.9" r="5"/>
<circle cx="1102.4" cy="578.1" r="5"/>
<circle cx="1106.9" cy="581.6" r="5"/>
<circle cx="1125.9" cy="577.8" r="5"/>
<circle cx="1171.8" cy="552.9" r="5"/>
<circle cx="1184.4" cy="547.1" r="5"/>
<circle cx="1197.9" cy="553.9" r="5"/>
<circle cx="1173.7" cy="564.2" r="5"/>
<circle cx="1157.2" cy="576.2" r="5"/>
<circle cx="1162.1" cy="583.6" r="5"/>
<circle cx="1147.6" cy="578.1" r="5"/>
<circle cx="1192.1" cy="583.6" r="5"/>
<circle cx="1196.0" cy="577.2" r="5"/>
<circle cx="1141.7" cy="593.3" r="5"/>
<circle cx="1153.4" cy="603.7" r="5"/>
<circle cx="1140.8" cy="607.2" r="5"/>
<circle cx="1152.0" cy="614.0" r="5"/>
<circle cx="1154.0" cy="622.3" r="5"/>
<circle cx="1141.7" cy="625.6" r="5"/>
<circle cx="1127.6" cy="634.0" r="5"/>
<circle cx="1147.6" cy="635.9" r="5"/>
<circle cx="1155.9" cy="640.2" r="5"/>
<circle cx="1167.9" cy="639.8" r="5"/>
<circle cx="1184.4" cy="633.0" r="5"/>
<circle cx="1184.4" cy="641.7" r="5"/>
<circle cx="1193.1" cy="646.0" r="5"/>
<circle cx="1195.0" cy="632.4" r="5"/>
<circle cx="1205.7" cy="635.9" r="5"/>
<circle cx="1221.8" cy="635.9" r="5"/>
<circle cx="1150.1" cy="649.5" r="5"/>
<circle cx="1148.5" cy="658.6" r="5"/>
<circle cx="1156.3" cy="657.6" r="5"/>
<circle cx="1164.0" cy="653.7" r="5"/>
<circle cx="1178.0" cy="655.7" r="5"/>
<circle cx="1199.9" cy="667.7" r="5"/>
<circle cx="1204.7" cy="663.4" r="5"/>
<circle cx="1079.7" cy="633.4" r="5"/>
<circle cx="1061.7" cy="638.6" r="5"/>
<circle cx="1055.9" cy="646.0" r="5"/>
<circle cx="1083.6" cy="649.5" r="5"/>
<circle cx="1084.2" cy="655.7" r="5"/>
<circle cx="1092.7" cy="668.3" r="5"/>
<circle cx="1098.1" cy="668.8" r="5"/>
<circle cx="1098.1" cy="676.0" r="5"/>
<circle cx="1100.1" cy="680.9" r="5"/>
<circle cx="1113.6" cy="658.6" r="5"/>
<circle cx="1113.6" cy="669.2" r="5"/>
<circle cx="1113.6" cy="678.9" r="5"/>
<circle cx="1132.1" cy="661.9" r="5"/>
<circle cx="1125.3" cy="655.7" r="5"/>
<circle cx="1087.5" cy="697.9" r="5"/>
<circle cx="1145.6" cy="713.8" r="5"/>
<circle cx="1159.8" cy="711.9" r="5"/>
<circle cx="1173.7" cy="709.9" r="5"/>
<circle cx="1179.9" cy="706.0" r="5"/>
<circle cx="1204.3" cy="713.8" r="5"/>
<circle cx="1150.1" cy="725.8" r="5"/>
<circle cx="1158.6" cy="728.3" r="5"/>
<circle cx="1117.9" cy="740.0" r="5"/>
<circle cx="1130.1" cy="747.7" r="5"/>
<circle cx="1147.6" cy="740.0" r="5"/>
<circle cx="1136.9" cy="745.8" r="5"/>
<circle cx="1143.7" cy="755.5" r="5"/>
<circle cx="1154.3" cy="757.4" r="5"/>
<circle cx="1166.0" cy="755.5" r="5"/>
<circle cx="1175.7" cy="751.6" r="5"/>
<circle cx="1179.9" cy="736.1" r="5"/>
<circle cx="1187.7" cy="740.0" r="5"/>
<circle cx="1197.9" cy="740.0" r="5"/>
<circle cx="1184.4" cy="755.5" r="5"/>
<circle cx="1123.3" cy="752.6" r="5"/>
<circle cx="1115.6" cy="764.2" r="5"/>
<circle cx="1139.8" cy="764.6" r="5"/>
<circle cx="1150.5" cy="768.1" r="5"/>
<circle cx="1162.1" cy="764.6" r="5"/>
<circle cx="1164.0" cy="771.9" r="5"/>
<circle cx="1148.5" cy="776.8" r="5"/>
<circle cx="1145.6" cy="783.6" r="5"/>
<circle cx="1152.4" cy="784.0" r="5"/>
<circle cx="1166.0" cy="785.5" r="5"/>
<circle cx="1175.7" cy="777.8" r="5"/>
<circle cx="1156.3" cy="744.8" r="5"/>
<circle cx="1173.7" cy="744.8" r="5"/>
<circle cx="1084.2" cy="777.8" r="5"/>
<circle cx="1103.0" cy="775.8" r="5"/>
<circle cx="1113.6" cy="777.8" r="5"/>
<circle cx="1077.8" cy="791.7" r="5"/>
<circle cx="1107.8" cy="798.1" r="5"/>
<circle cx="1132.1" cy="803.9" r="5"/>
<circle cx="1157.8" cy="802.0" r="5"/>
<circle cx="1164.0" cy="797.1" r="5"/>
<circle cx="1260.8" cy="635.7" r="5"/>
<circle cx="1280.0" cy="612.4" r="5"/>
<circle cx="1281.4" cy="609.7" r="5"/>
<circle cx="1296.5" cy="609.7" r="5"/>
<circle cx="1259.4" cy="683.7" r="5"/>
<circle cx="1370.5" cy="702.9" r="5"/>
<circle cx="1366.4" cy="705.6" r="5"/>
<circle cx="1319.8" cy="763.8" r="5"/>
<circle cx="1329.4" cy="759.1" r="5"/>
<circle cx="1293.7" cy="797.5" r="5"/>
<circle cx="1385.6" cy="629.4" r="5"/>
<circle cx="1359.5" cy="583.6" r="5"/>
<circle cx="1386.9" cy="578.1" r="5"/>
<circle cx="1469.2" cy="697.4" r="5"/>
<circle cx="1481.5" cy="715.8" r="5"/>
<circle cx="1501.3" cy="719.4" r="5"/>
<circle cx="1493.3" cy="733.9" r="5"/>
<circle cx="1481.5" cy="819.4" r="5"/>
<circle cx="1523.5" cy="835.3" r="5"/>
<circle cx="1493.3" cy="870.2" r="5"/>
<circle cx="1333.5" cy="907.7" r="5"/>
<circle cx="1339.8" cy="919.5" r="5"/>
<circle cx="1476.1" cy="915.4" r="5"/>
<circle cx="1195.0" cy="941.7" r="5"/>
<circle cx="1219.7" cy="938.1" r="5"/>
<circle cx="1357.6" cy="933.5" r="5"/>
<circle cx="1317.8" cy="956.0" r="5"/>
<circle cx="1309.6" cy="973.8" r="5"/>
<circle cx="1354.0" cy="995.7" r="5"/>
<circle cx="1369.7" cy="1001.8" r="5"/>
<circle cx="1289.6" cy="1008.1" r="5"/>
<circle cx="1232.0" cy="1079.4" r="5"/>
<circle cx="1430.0" cy="1047.8" r="5"/>
<circle cx="1409.7" cy="1057.4" r="5"/>
<circle cx="1395.7" cy="1067.6" r="5"/>
<circle cx="1454.1" cy="1081.6" r="5"/>
<circle cx="1309.6" cy="1121.9" r="5"/>
<circle cx="1535.0" cy="1124.6" r="5"/>
<circle cx="1030.5" cy="1167.9" r="5"/>
<circle cx="1031.9" cy="1181.6" r="5"/>
<circle cx="1029.1" cy="1185.7" r="5"/>
<circle cx="1040.1" cy="1191.2" r="5"/>
<circle cx="1049.7" cy="1193.9" r="5"/>
<circle cx="1036.0" cy="1195.3" r="5"/>
<circle cx="1059.3" cy="1180.2" r="5"/>
<circle cx="1067.5" cy="1181.6" r="5"/>
<circle cx="1063.4" cy="1191.2" r="5"/>
<circle cx="1071.6" cy="1185.7" r="5"/>
<circle cx="1081.2" cy="1188.4" r="5"/>
<circle cx="1088.1" cy="1198.0" r="5"/>
<circle cx="1097.7" cy="1191.2" r="5"/>
<circle cx="1107.3" cy="1180.2" r="5"/>
<circle cx="1112.7" cy="1188.4" r="5"/>
<circle cx="1118.2" cy="1177.5" r="5"/>
<circle cx="1119.6" cy="1183.0" r="5"/>
<circle cx="1068.3" cy="1205.7" r="5"/>
<circle cx="1036.0" cy="1210.4" r="5"/>
<circle cx="1023.6" cy="1211.7" r="5"/>
<circle cx="994.8" cy="1204.1" r="5"/>
<circle cx="989.4" cy="1204.9" r="5"/>
<circle cx="970.2" cy="1220.0" r="5"/>
<circle cx="972.9" cy="1215.9" r="5"/>
<circle cx="1153.9" cy="1156.4" r="5"/>
<circle cx="1161.6" cy="1196.1" r="5"/>
<circle cx="1179.9" cy="1207.6" r="5"/>
<circle cx="1213.6" cy="1209.8" r="5"/>
<circle cx="1262.2" cy="1202.1" r="5"/>
<circle cx="1269.9" cy="1195.8" r="5"/>
<circle cx="1158.0" cy="1228.2" r="5"/>
<circle cx="1079.3" cy="1230.9" r="5"/>
<circle cx="1097.7" cy="1229.6" r="5"/>
<circle cx="1093.6" cy="1233.7" r="5"/>
<circle cx="1085.3" cy="1240.5" r="5"/>
<circle cx="1067.5" cy="1237.8" r="5"/>
<circle cx="1059.3" cy="1239.2" r="5"/>
<circle cx="1046.9" cy="1243.3" r="5"/>
<circle cx="1038.7" cy="1244.6" r="5"/>
<circle cx="1031.9" cy="1254.2" r="5"/>
<circle cx="1063.4" cy="1247.4" r="5"/>
<circle cx="1070.2" cy="1258.4" r="5"/>
<circle cx="1079.8" cy="1255.6" r="5"/>
<circle cx="1088.1" cy="1259.7" r="5"/>
<circle cx="1081.2" cy="1273.4" r="5"/>
<circle cx="1082.6" cy="1284.4" r="5"/>
<circle cx="1074.4" cy="1285.8" r="5"/>
<circle cx="1067.5" cy="1277.6" r="5"/>
<circle cx="1043.6" cy="1277.6" r="5"/>
<circle cx="1015.4" cy="1285.8" r="5"/>
<circle cx="1063.4" cy="1294.0" r="5"/>
<circle cx="1046.9" cy="1311.8" r="5"/>
<circle cx="1055.2" cy="1309.9" r="5"/>
<circle cx="1064.8" cy="1309.1" r="5"/>
<circle cx="1105.9" cy="1269.3" r="5"/>
<circle cx="1119.6" cy="1241.9" r="5"/>
<circle cx="1142.9" cy="1241.9" r="5"/>
<circle cx="1151.1" cy="1243.3" r="5"/>
<circle cx="1129.2" cy="1251.5" r="5"/>
<circle cx="1127.8" cy="1259.7" r="5"/>
<circle cx="1136.1" cy="1269.3" r="5"/>
<circle cx="1121.0" cy="1250.1" r="5"/>
<circle cx="1190.9" cy="1254.2" r="5"/>
<circle cx="1185.4" cy="1254.2" r="5"/>
<circle cx="1205.4" cy="1250.1" r="5"/>
<circle cx="1215.6" cy="1244.6" r="5"/>
<circle cx="1219.7" cy="1250.1" r="5"/>
<circle cx="1227.9" cy="1252.3" r="5"/>
<circle cx="1179.9" cy="1263.8" r="5"/>
<circle cx="1171.7" cy="1266.0" r="5"/>
<circle cx="1201.9" cy="1273.4" r="5"/>
<circle cx="1215.6" cy="1283.9" r="5"/>
<circle cx="1177.2" cy="1296.2" r="5"/>
<circle cx="1186.0" cy="1299.5" r="5"/>
<circle cx="1156.1" cy="1302.2" r="5"/>
<circle cx="1131.9" cy="1318.1" r="5"/>
<circle cx="1119.6" cy="1328.3" r="5"/>
<circle cx="1112.7" cy="1331.0" r="5"/>
<circle cx="1217.5" cy="1329.6" r="5"/>
<circle cx="1062.0" cy="1367.5" r="5"/>
<circle cx="1421.2" cy="1134.4" r="5"/>
<circle cx="1429.4" cy="1135.0" r="5"/>
<circle cx="1429.4" cy="1141.8" r="5"/>
<circle cx="1430.0" cy="1148.7" r="5"/>
<circle cx="1456.9" cy="1178.8" r="5"/>
<circle cx="1462.3" cy="1181.6" r="5"/>
<circle cx="1456.9" cy="1189.8" r="5"/>
<circle cx="1471.9" cy="1189.8" r="5"/>
<circle cx="1463.7" cy="1209.5" r="5"/>
<circle cx="1415.7" cy="1207.6" r="5"/>
<circle cx="1526.8" cy="1173.4" r="5"/>
<circle cx="1528.2" cy="1180.2" r="5"/>
<circle cx="1535.0" cy="1176.1" r="5"/>
<circle cx="1367.7" cy="1303.6" r="5"/>
<circle cx="1383.7" cy="1299.5" r="5"/>
<circle cx="1392.4" cy="1298.1" r="5"/>
<circle cx="1400.1" cy="1297.6" r="5"/>
<circle cx="1311.5" cy="1323.6" r="5"/>
<circle cx="1323.9" cy="1321.4" r="5"/>
<circle cx="1363.6" cy="1335.7" r="5"/>
<circle cx="1356.0" cy="1342.0" r="5"/>
<circle cx="1350.5" cy="1346.1" r="5"/>
<circle cx="1325.8" cy="1361.7" r="5"/>
<circle cx="1539.8" cy="905.5" r="5"/>
<circle cx="1557.7" cy="910.4" r="5"/>
<circle cx="1544.0" cy="916.5" r="5"/>
<circle cx="1533.8" cy="919.7" r="5"/>
<circle cx="1523.4" cy="924.7" r="5"/>
<circle cx="1513.8" cy="921.4" r="5"/>
<circle cx="1505.6" cy="926.0" r="5"/>
<circle cx="1513.8" cy="935.6" r="5"/>
<circle cx="1505.6" cy="941.7" r="5"/>
<circle cx="1476.2" cy="915.9" r="5"/>
<circle cx="1601.5" cy="904.1" r="5"/>
<circle cx="1583.7" cy="961.7" r="5"/>
<circle cx="1629.8" cy="976.0" r="5"/>
<circle cx="1547.5" cy="1007.5" r="5"/>
<circle cx="1429.6" cy="1048.1" r="5"/>
<circle cx="1409.6" cy="1057.7" r="5"/>
<circle cx="1453.5" cy="1081.5" r="5"/>
<circle cx="1619.4" cy="1099.6" r="5"/>
<circle cx="1535.7" cy="1123.5" r="5"/>
<circle cx="1535.7" cy="1127.6" r="5"/>
<circle cx="1639.9" cy="1139.9" r="5"/>
<circle cx="1605.6" cy="1148.1" r="5"/>
<circle cx="1547.5" cy="1148.1" r="5"/>
<circle cx="1527.5" cy="1179.7" r="5"/>
<circle cx="1539.8" cy="1183.8" r="5"/>
<circle cx="1534.4" cy="1174.2" r="5"/>
<circle cx="1545.3" cy="1171.5" r="5"/>
<circle cx="1542.0" cy="1175.6" r="5"/>
<circle cx="1461.7" cy="1181.1" r="5"/>
<circle cx="1457.6" cy="1189.3" r="5"/>
<circle cx="1471.8" cy="1190.1" r="5"/>
<circle cx="1463.6" cy="1209.8" r="5"/>
<circle cx="1415.9" cy="1207.7" r="5"/>
<circle cx="1593.3" cy="1177.8" r="5"/>
<circle cx="1590.6" cy="1172.8" r="5"/>
<circle cx="1615.8" cy="1169.5" r="5"/>
<circle cx="1615.8" cy="1177.8" r="5"/>
<circle cx="1401.4" cy="1297.6" r="5"/>
<circle cx="1735.8" cy="819.8" r="5"/>
<circle cx="1735.8" cy="833.8" r="5"/>
<circle cx="1748.2" cy="833.8" r="5"/>
<circle cx="1723.9" cy="869.8" r="5"/>
<circle cx="1749.8" cy="863.3" r="5"/>
<circle cx="1773.8" cy="861.7" r="5"/>
<circle cx="1796.3" cy="865.9" r="5"/>
<circle cx="1752.1" cy="872.1" r="5"/>
<circle cx="1767.6" cy="873.6" r="5"/>
<circle cx="1759.8" cy="870.5" r="5"/>
<circle cx="1742.0" cy="886.0" r="5"/>
<circle cx="1761.4" cy="889.9" r="5"/>
<circle cx="1773.0" cy="880.6" r="5"/>
<circle cx="1786.2" cy="879.8" r="5"/>
<circle cx="1790.1" cy="887.6" r="5"/>
<circle cx="1794.7" cy="880.6" r="5"/>
<circle cx="1804.0" cy="889.9" r="5"/>
<circle cx="1785.4" cy="894.6" r="5"/>
<circle cx="1797.8" cy="901.6" r="5"/>
<circle cx="1769.9" cy="898.4" r="5"/>
<circle cx="1759.8" cy="900.0" r="5"/>
<circle cx="1739.7" cy="898.4" r="5"/>
<circle cx="1735.8" cy="906.2" r="5"/>
<circle cx="1745.9" cy="906.2" r="5"/>
<circle cx="1777.7" cy="903.1" r="5"/>
<circle cx="1757.5" cy="911.6" r="5"/>
<circle cx="1772.2" cy="910.9" r="5"/>
<circle cx="1731.2" cy="917.8" r="5"/>
<circle cx="1743.6" cy="919.4" r="5"/>
<circle cx="1724.2" cy="917.1" r="5"/>
<circle cx="1767.6" cy="919.4" r="5"/>
<circle cx="1748.2" cy="914.7" r="5"/>
<circle cx="1757.5" cy="925.6" r="5"/>
<circle cx="1717.2" cy="928.7" r="5"/>
<circle cx="1726.5" cy="926.4" r="5"/>
<circle cx="1709.5" cy="938.0" r="5"/>
<circle cx="1716.4" cy="935.7" r="5"/>
<circle cx="1724.2" cy="935.7" r="5"/>
<circle cx="1732.7" cy="931.8" r="5"/>
<circle cx="1748.2" cy="931.8" r="5"/>
<circle cx="1728.1" cy="945.0" r="5"/>
<circle cx="1739.7" cy="945.7" r="5"/>
<circle cx="1752.1" cy="941.9" r="5"/>
<circle cx="1760.6" cy="939.5" r="5"/>
<circle cx="1768.4" cy="948.1" r="5"/>
<circle cx="1762.2" cy="945.7" r="5"/>
<circle cx="1767.6" cy="955.0" r="5"/>
<circle cx="1704.8" cy="957.4" r="5"/>
<circle cx="1708.7" cy="959.7" r="5"/>
<circle cx="1716.0" cy="962.0" r="5"/>
<circle cx="1726.5" cy="955.0" r="5"/>
<circle cx="1726.5" cy="962.0" r="5"/>
<circle cx="1739.7" cy="953.5" r="5"/>
<circle cx="1748.2" cy="955.0" r="5"/>
<circle cx="1756.7" cy="956.6" r="5"/>
<circle cx="1752.1" cy="962.8" r="5"/>
<circle cx="1737.4" cy="967.4" r="5"/>
<circle cx="1744.3" cy="967.4" r="5"/>
<circle cx="1728.8" cy="969.0" r="5"/>
<circle cx="1753.6" cy="971.3" r="5"/>
<circle cx="1753.6" cy="979.1" r="5"/>
<circle cx="1780.0" cy="959.7" r="5"/>
<circle cx="1811.8" cy="947.3" r="5"/>
<circle cx="1816.4" cy="963.6" r="5"/>
<circle cx="1742.0" cy="983.7" r="5"/>
<circle cx="1780.0" cy="985.3" r="5"/>
<circle cx="1731.9" cy="1000.0" r="5"/>
<circle cx="1740.5" cy="997.7" r="5"/>
<circle cx="1759.8" cy="1003.1" r="5"/>
<circle cx="1769.9" cy="1001.6" r="5"/>
<circle cx="1759.8" cy="1008.5" r="5"/>
<circle cx="1770.7" cy="1011.6" r="5"/>
<circle cx="1720.0" cy="1011.6" r="5"/>
<circle cx="1790.1" cy="1011.6" r="5"/>
<circle cx="1469.9" cy="697.4" r="5"/>
<circle cx="1481.7" cy="715.8" r="5"/>
<circle cx="1501.5" cy="719.4" r="5"/>
<circle cx="1493.8" cy="733.9" r="5"/>
<circle cx="1667.9" cy="719.4" r="5"/>
<circle cx="1743.6" cy="721.6" r="5"/>
<circle cx="1737.8" cy="729.8" r="5"/>
<circle cx="1643.5" cy="741.8" r="5"/>
<circle cx="1481.7" cy="819.4" r="5"/>
<circle cx="1523.9" cy="835.3" r="5"/>
<circle cx="1587.8" cy="851.5" r="5"/>
<circle cx="1625.7" cy="846.0" r="5"/>
<circle cx="1659.7" cy="859.2" r="5"/>
<circle cx="1493.8" cy="870.2" r="5"/>
<circle cx="1612.0" cy="891.6" r="5"/>
<circle cx="1601.5" cy="903.6" r="5"/>
<circle cx="1723.6" cy="869.6" r="5"/>
</g>
</svg>
</body></html>
